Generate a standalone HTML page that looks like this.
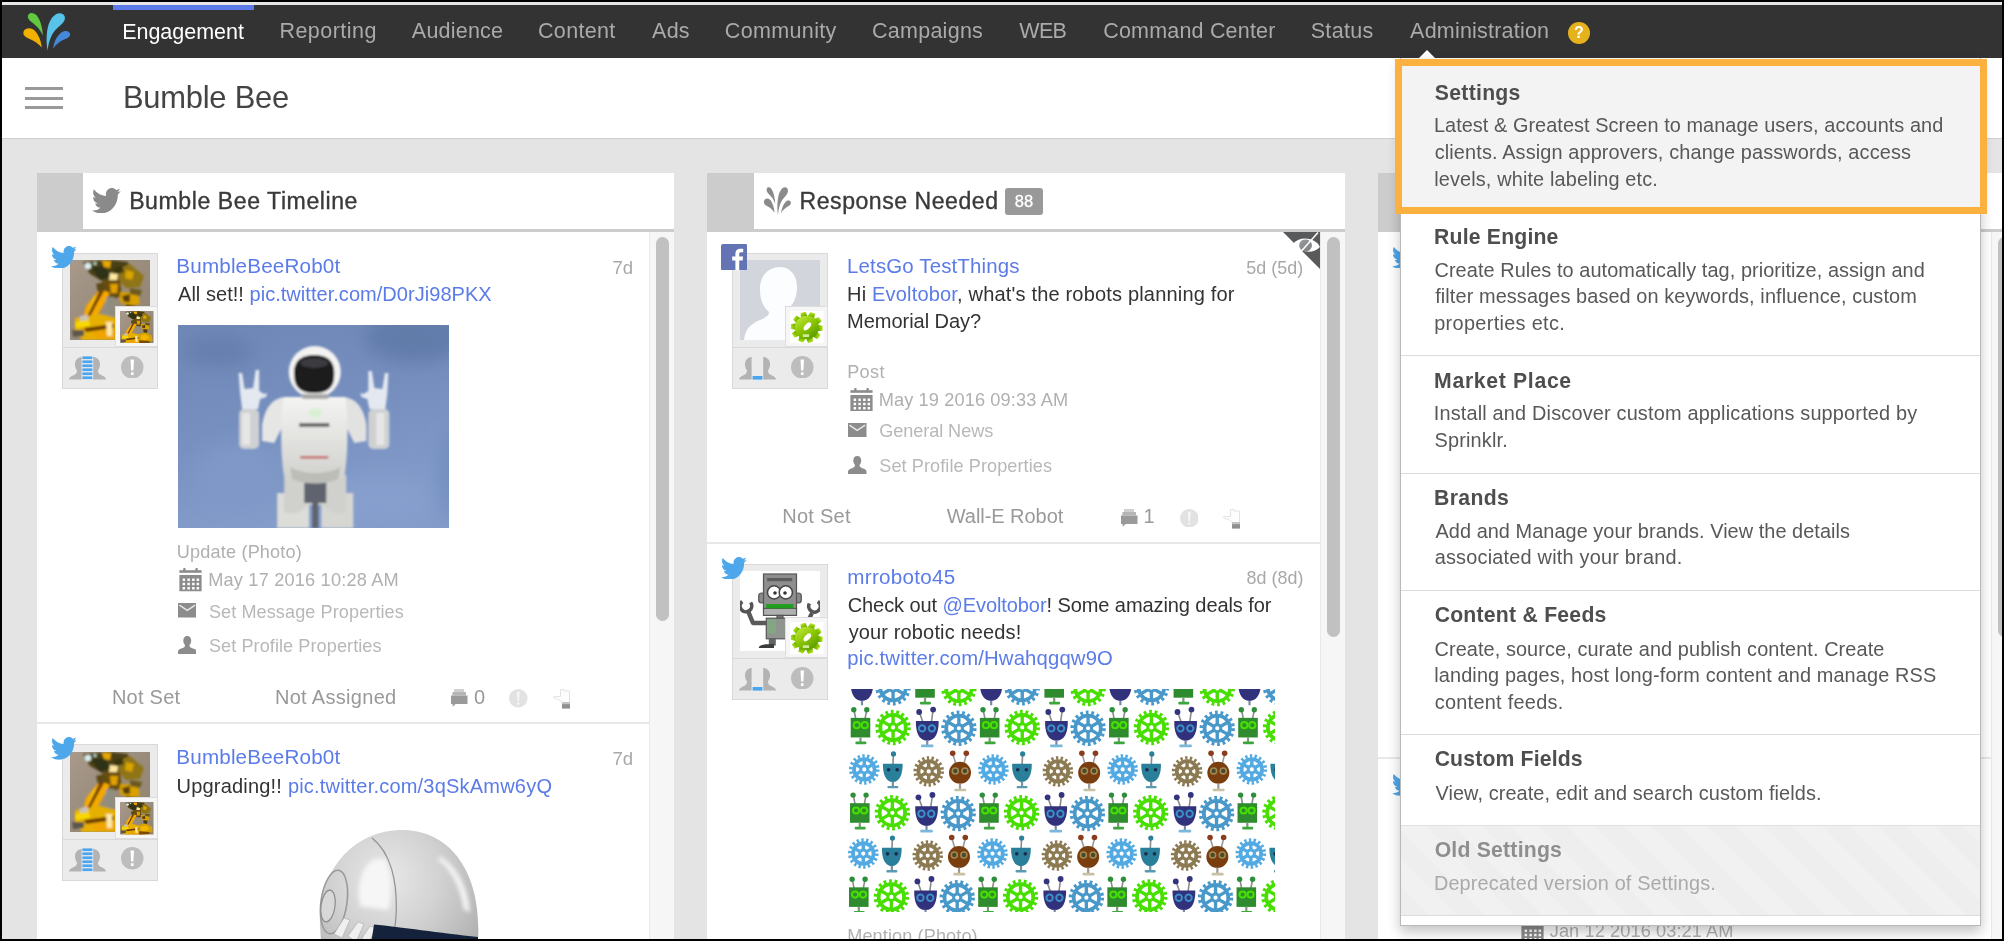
<!DOCTYPE html>
<html><head><meta charset="utf-8"><title>Bumble Bee - Engagement</title>
<style>
*{box-sizing:border-box;margin:0;padding:0}
html,body{width:2004px;height:941px;overflow:hidden;background:#000;font-family:"Liberation Sans",sans-serif;}
#frame{will-change:transform;position:absolute;left:2px;top:2px;width:2000px;height:937px;background:#e4e4e4;overflow:hidden}
#topline{position:absolute;left:0;top:0;width:2000px;height:2.5px;background:#e6e6e6;z-index:5}
#nav{position:absolute;left:0;top:2px;width:2000px;height:54px;background:#333}
#activebar{position:absolute;left:111px;top:0.5px;width:141px;height:5.5px;background:#5b7be9}
#help{position:absolute;left:1566px;top:18px;width:22px;height:22px;border-radius:50%;background:#e5b21c;color:#fff;font-weight:bold;font-size:16px;line-height:22px;text-align:center}
#caret{position:absolute;left:1417px;top:45.5px;width:0;height:0;border-left:8.5px solid transparent;border-right:8.5px solid transparent;border-bottom:8.5px solid #fff}
#hdr{position:absolute;left:0;top:56px;width:2000px;height:81px;background:#fff;border-bottom:1.5px solid #cfcfcf}
.hb{position:absolute;left:23px;width:38px;height:3px;background:#999}
#main{position:absolute;left:0;top:137px;width:2000px;height:800px}
.col{position:absolute;top:33px;width:637.3px;height:770px}
.colhdr{position:absolute;left:0;top:0;width:100%;height:60px;border-bottom:3px solid #ccc}
.hbg{position:absolute;left:0;top:0.5px;width:100%;height:56.5px;background:#fff}
.handle{position:absolute;left:0;top:0.5px;width:46.3px;height:56.5px;background:#ccc}
.badge{position:absolute;left:297.5px;top:15.5px;width:38px;height:27.5px;border-radius:3px;background:#999;color:#fff;font-size:16.5px;line-height:27.5px;text-align:center;-webkit-text-stroke:0.3px #fff}
.colbody{position:absolute;left:0;top:60px;width:100%;height:720px;background:#fff;overflow:hidden}
.track{position:absolute;right:0;top:0;width:25px;height:100%;background:#f6f6f6;border-left:1px solid #e9e9e9}
.thumb{position:absolute;left:6px;width:13px;border-radius:7px;background:#c1c1c1}
.sep{position:absolute;left:0;width:612.5px;height:2px;background:#e8e8e8}
.abox{position:absolute;width:95.5px;height:136.5px;background:#ebebeb;border:1px solid #d9d9d9}
.abox .av{position:absolute;left:7px;top:6.5px;width:80px;height:80px;overflow:hidden}
.abox .sm{position:absolute;left:52px;top:52px;width:42.5px;height:41.5px;background:#f6f6f6;border:1px solid #ddd}
.abox .sm > *{position:absolute;left:4px;top:4px;width:33.5px;height:32.5px}
.abox .line{position:absolute;left:0;top:93.5px;width:100%;height:1px;background:#d9d9d9}
#dd{position:absolute;width:581px;height:867.5px;background:#fff;box-shadow:0 6px 12px rgba(0,0,0,.24);border:1px solid #b9b9b9;border-top:none}

</style></head>
<body>
<div id="frame">
<div id="topline"></div>
<div id="nav"><div id="activebar"></div><svg style="position:absolute;left:0;top:0" width="90" height="54" viewBox="2 4 90 54">
<path fill="#62c840" d="M42.8,35.6 C42.6,28 40.5,20.5 36.8,15.6 C34.2,12.4 29.6,12 28.2,15 C27,18 29.5,20.6 32.5,22.8 C37,26.2 40.6,30 42.8,35.6Z"/>
<path fill="#57c3e8" d="M47.5,50.5 C46.2,42 46.2,32 48.6,24.6 C50.5,18.6 54.5,13.6 59.6,13.2 C64.2,13 66,17 64.4,20.6 C62.8,24.2 58.6,26.6 55.4,30 C51.4,34.4 48.8,41.5 47.5,50.5Z"/>
<path fill="#f2b100" d="M41.8,47.6 C41.2,41.5 38.8,34.5 34.6,30.4 C31,27.2 25.6,27.6 23.8,31 C22.2,34.4 25,37 28.6,38.4 C33.8,40.4 38.4,43.4 41.8,47.6Z"/>
<path fill="#4489d9" d="M53.2,48.6 C53.6,43 56.4,36.6 60.8,33 C64.4,30 69,30.6 70,33.4 C70.8,36.2 68,38 64.8,39.2 C60.2,41 56,44 53.2,48.6Z"/>
</svg><span style="position:absolute;left:120.13px;top:18px;font-size:21.5px;line-height:1;color:#fff;white-space:nowrap;letter-spacing:-0.006px;">Engagement</span><span style="position:absolute;left:277.38px;top:17px;font-size:21.5px;line-height:1;color:#aaa;white-space:nowrap;letter-spacing:0.475px;">Reporting</span><span style="position:absolute;left:409.85px;top:17px;font-size:21.5px;line-height:1;color:#aaa;white-space:nowrap;letter-spacing:0.211px;">Audience</span><span style="position:absolute;left:536.02px;top:17px;font-size:21.5px;line-height:1;color:#aaa;white-space:nowrap;letter-spacing:0.322px;">Content</span><span style="position:absolute;left:650.10px;top:17px;font-size:21.5px;line-height:1;color:#aaa;white-space:nowrap;letter-spacing:0.220px;">Ads</span><span style="position:absolute;left:722.77px;top:17px;font-size:21.5px;line-height:1;color:#aaa;white-space:nowrap;letter-spacing:0.357px;">Community</span><span style="position:absolute;left:870.02px;top:17px;font-size:21.5px;line-height:1;color:#aaa;white-space:nowrap;letter-spacing:0.260px;">Campaigns</span><span style="position:absolute;left:1017.24px;top:17px;font-size:21.5px;line-height:1;color:#aaa;white-space:nowrap;letter-spacing:-0.629px;">WEB</span><span style="position:absolute;left:1101.27px;top:17px;font-size:21.5px;line-height:1;color:#aaa;white-space:nowrap;letter-spacing:0.186px;">Command Center</span><span style="position:absolute;left:1308.63px;top:17px;font-size:21.5px;line-height:1;color:#aaa;white-space:nowrap;letter-spacing:0.353px;">Status</span><span style="position:absolute;left:1408.10px;top:17px;font-size:21.5px;line-height:1;color:#aaa;white-space:nowrap;letter-spacing:0.207px;">Administration</span><div id="help">?</div><div id="caret"></div></div>
<div id="hdr"><div class="hb" style="top:28.5px"></div><div class="hb" style="top:39.3px"></div><div class="hb" style="top:48.3px"></div><span style="position:absolute;left:120.93px;top:25px;font-size:30.9px;line-height:1;color:#444;white-space:nowrap;letter-spacing:-0.228px;">Bumble Bee</span></div>
<div id="main">
<div class="col" style="left:35px"><div class="colhdr"><div class="hbg"></div><div class="handle"></div><svg style="position:absolute;left:55px;top:15.5px" width="28.75" height="25.44" viewBox="0 2.2 24 19.6" preserveAspectRatio="none"><path fill="#8a8a8a" d="M23.953 4.57a10 10 0 01-2.825.775 4.958 4.958 0 002.163-2.723c-.951.555-2.005.959-3.127 1.184a4.92 4.92 0 00-8.384 4.482C7.69 8.095 4.067 6.13 1.64 3.162a4.822 4.822 0 00-.666 2.475c0 1.71.87 3.213 2.188 4.096a4.904 4.904 0 01-2.228-.616v.06a4.923 4.923 0 003.946 4.827 4.996 4.996 0 01-2.212.085 4.936 4.936 0 004.604 3.417 9.867 9.867 0 01-6.102 2.105c-.39 0-.779-.023-1.17-.067a13.995 13.995 0 007.557 2.209c9.053 0 13.998-7.496 13.998-13.985 0-.21 0-.42-.015-.63A9.935 9.935 0 0024 4.59z"/></svg><span style="position:absolute;left:92.15px;top:18px;font-size:23.1px;line-height:1;color:#3a3a3a;white-space:nowrap;letter-spacing:0.560px;-webkit-text-stroke:0.35px #3a3a3a;">Bumble Bee Timeline</span></div><div class="colbody"><div class="abox" style="left:25px;top:20.5px"><div class="av"><svg width="80" height="80" viewBox="0 0 80 80" preserveAspectRatio="none" style="display:block">
<defs><filter id="bb1" x="-10%" y="-10%" width="120%" height="120%"><feGaussianBlur stdDeviation="0.9"/></filter>
<linearGradient id="bb1g" x1="0" y1="0" x2="1" y2="1"><stop offset="0" stop-color="#a8998a"/><stop offset="0.5" stop-color="#9a8c7c"/><stop offset="1" stop-color="#8e8270"/></linearGradient></defs>
<rect width="80" height="80" fill="url(#bb1g)"/>
<g filter="url(#bb1)">
<path d="M13,2 L40,0 L58,2 L60,14 L52,22 L34,22 L20,14Z" fill="#4a3f12"/>
<path d="M22,8 L34,6 L40,16 L30,20Z" fill="#2e3018"/>
<circle cx="18" cy="6" r="3.2" fill="#d8efef"/><circle cx="25" cy="3.5" r="1.6" fill="#bfe0d8"/>
<path d="M32,1 L41,1 L40,8 L34,7Z" fill="#e8a800"/>
<path d="M40,13 L48,14 L47,21 L39,20Z" fill="#ffe8a0"/>
<path d="M52,16 L60,17 L58,23 L52,22Z" fill="#ffe090"/>
<path d="M50,8 L60,4 L74,16 L70,27 L56,28 L48,20Z" fill="#8f7414"/>
<path d="M56,10 L64,12 L62,20 L55,18Z" fill="#d9a400"/>
<path d="M33,20 L50,20 L52,36 L40,40 L32,34Z" fill="#6b4e0c"/>
<path d="M40,24 L48,24 L47,33 L41,33Z" fill="#e0a000"/>
<path d="M30,29 L40,33 L26,58 L13,58 L16,46Z" fill="#f5a800"/>
<path d="M24,36 L31,38 L22,55 L17,54Z" fill="#ffc800"/>
<path d="M30,30 L34,31 L20,57 L17,56Z" fill="#7a3e00"/>
<path d="M50,32 L68,33 L70,44 L58,46 L50,42Z" fill="#d9a000"/>
<path d="M52,36 L60,34 L60,42 L54,42Z" fill="#5a4008"/>
<path d="M36,37 L44,37 L44,56 L36,54Z" fill="#8e8e80"/>
<path d="M5,58 L30,54 L46,58 L46,80 L12,80 L5,70Z" fill="#e6b000"/>
<path d="M5,62 L19,60 L20,66 L6,68Z" fill="#f8d800"/>
<path d="M14,68 L44,64 L44,68 L16,72Z" fill="#6a3a00"/>
<path d="M20,72 L44,70 L44,79 L26,79Z" fill="#f0a400"/>
<path d="M36,62 L42,62 L42,76 L37,76Z" fill="#ffe9a8"/>
<path d="M2,70 L14,70 L14,76 L3,77Z" fill="#5c564c"/>
<path d="M10,56 L18,55 L18,60 L10,61Z" fill="#c9c4b8"/>
<path d="M46,56 L60,52 L76,60 L78,72 L66,80 L46,80Z" fill="#d8a000"/>
<path d="M50,60 L62,58 L70,66 L60,72 L50,70Z" fill="#f2b800"/>
<path d="M46,72 L70,74 L72,78 L46,80Z" fill="#7a4a00"/>
<path d="M56,44 L66,46 L64,54 L56,52Z" fill="#4a3a10"/>
<path d="M26,24 L34,22 L36,30 L28,32Z" fill="#5a4a14"/>
<path d="M60,28 L72,30 L70,36 L60,34Z" fill="#6a5a1c"/>
<path d="M44,8 L52,6 L54,12 L46,14Z" fill="#3a3410"/>
</g></svg></div><div class="sm"><svg width="33.5" height="32.5" viewBox="0 0 80 80" preserveAspectRatio="none" style="display:block">
<defs><filter id="bb2" x="-10%" y="-10%" width="120%" height="120%"><feGaussianBlur stdDeviation="0.9"/></filter>
<linearGradient id="bb2g" x1="0" y1="0" x2="1" y2="1"><stop offset="0" stop-color="#a8998a"/><stop offset="0.5" stop-color="#9a8c7c"/><stop offset="1" stop-color="#8e8270"/></linearGradient></defs>
<rect width="80" height="80" fill="url(#bb2g)"/>
<g filter="url(#bb2)">
<path d="M13,2 L40,0 L58,2 L60,14 L52,22 L34,22 L20,14Z" fill="#4a3f12"/>
<path d="M22,8 L34,6 L40,16 L30,20Z" fill="#2e3018"/>
<circle cx="18" cy="6" r="3.2" fill="#d8efef"/><circle cx="25" cy="3.5" r="1.6" fill="#bfe0d8"/>
<path d="M32,1 L41,1 L40,8 L34,7Z" fill="#e8a800"/>
<path d="M40,13 L48,14 L47,21 L39,20Z" fill="#ffe8a0"/>
<path d="M52,16 L60,17 L58,23 L52,22Z" fill="#ffe090"/>
<path d="M50,8 L60,4 L74,16 L70,27 L56,28 L48,20Z" fill="#8f7414"/>
<path d="M56,10 L64,12 L62,20 L55,18Z" fill="#d9a400"/>
<path d="M33,20 L50,20 L52,36 L40,40 L32,34Z" fill="#6b4e0c"/>
<path d="M40,24 L48,24 L47,33 L41,33Z" fill="#e0a000"/>
<path d="M30,29 L40,33 L26,58 L13,58 L16,46Z" fill="#f5a800"/>
<path d="M24,36 L31,38 L22,55 L17,54Z" fill="#ffc800"/>
<path d="M30,30 L34,31 L20,57 L17,56Z" fill="#7a3e00"/>
<path d="M50,32 L68,33 L70,44 L58,46 L50,42Z" fill="#d9a000"/>
<path d="M52,36 L60,34 L60,42 L54,42Z" fill="#5a4008"/>
<path d="M36,37 L44,37 L44,56 L36,54Z" fill="#8e8e80"/>
<path d="M5,58 L30,54 L46,58 L46,80 L12,80 L5,70Z" fill="#e6b000"/>
<path d="M5,62 L19,60 L20,66 L6,68Z" fill="#f8d800"/>
<path d="M14,68 L44,64 L44,68 L16,72Z" fill="#6a3a00"/>
<path d="M20,72 L44,70 L44,79 L26,79Z" fill="#f0a400"/>
<path d="M36,62 L42,62 L42,76 L37,76Z" fill="#ffe9a8"/>
<path d="M2,70 L14,70 L14,76 L3,77Z" fill="#5c564c"/>
<path d="M10,56 L18,55 L18,60 L10,61Z" fill="#c9c4b8"/>
<path d="M46,56 L60,52 L76,60 L78,72 L66,80 L46,80Z" fill="#d8a000"/>
<path d="M50,60 L62,58 L70,66 L60,72 L50,70Z" fill="#f2b800"/>
<path d="M46,72 L70,74 L72,78 L46,80Z" fill="#7a4a00"/>
<path d="M56,44 L66,46 L64,54 L56,52Z" fill="#4a3a10"/>
<path d="M26,24 L34,22 L36,30 L28,32Z" fill="#5a4a14"/>
<path d="M60,28 L72,30 L70,36 L60,34Z" fill="#6a5a1c"/>
<path d="M44,8 L52,6 L54,12 L46,14Z" fill="#3a3410"/>
</g></svg></div><div class="line"></div><svg style="position:absolute;left:5.5px;top:102.5px" width="37" height="24" viewBox="0 0 37 24"><path fill="#b3b3b3" d="M18.5,0 C25,0 31,2 31,8 C31,12 29.6,13.4 29,14.6 C29,17 30,18 32,19 C35,20.4 37,21.4 37,23.6 H0 C0,21.4 2,20.4 5,19 C7,18 8,17 8,14.6 C7.4,13.4 6,12 6,8 C6,2 12,0 18.5,0Z"/><rect x="12.6" y="0" width="11.6" height="24" fill="#ebebeb"/><rect x="13.4" y="0.4" width="10" height="2.7" fill="#4aa6f0"/><rect x="13.4" y="4.4" width="10" height="2.7" fill="#4aa6f0"/><rect x="13.4" y="8.4" width="10" height="2.7" fill="#4aa6f0"/><rect x="13.4" y="12.4" width="10" height="2.7" fill="#4aa6f0"/><rect x="13.4" y="16.4" width="10" height="2.7" fill="#4aa6f0"/><rect x="13.4" y="20.4" width="10" height="2.7" fill="#4aa6f0"/></svg><svg style="position:absolute;left:58px;top:102px" width="22.5" height="22.5" viewBox="0 0 22 22">
<circle cx="11" cy="11" r="11" fill="#bdbdbd"/><path fill="#fff" d="M9.3,3.4 H12.7 L12.1,14.2 H9.9Z M9.7,16 H12.3 V18.6 H9.7Z"/></svg></div><svg style="position:absolute;left:13.5px;top:13.5px" width="25.75" height="22.79" viewBox="0 2.2 24 19.6" preserveAspectRatio="none"><path fill="#4da7ea" d="M23.953 4.57a10 10 0 01-2.825.775 4.958 4.958 0 002.163-2.723c-.951.555-2.005.959-3.127 1.184a4.92 4.92 0 00-8.384 4.482C7.69 8.095 4.067 6.13 1.64 3.162a4.822 4.822 0 00-.666 2.475c0 1.71.87 3.213 2.188 4.096a4.904 4.904 0 01-2.228-.616v.06a4.923 4.923 0 003.946 4.827 4.996 4.996 0 01-2.212.085 4.936 4.936 0 004.604 3.417 9.867 9.867 0 01-6.102 2.105c-.39 0-.779-.023-1.17-.067a13.995 13.995 0 007.557 2.209c9.053 0 13.998-7.496 13.998-13.985 0-.21 0-.42-.015-.63A9.935 9.935 0 0024 4.59z"/></svg><span style="position:absolute;left:139.35px;top:24px;font-size:20.65px;line-height:1;color:#5b7be9;white-space:nowrap;letter-spacing:0.155px;">BumbleBeeRob0t</span><span style="position:absolute;right:41.16px;top:27px;font-size:18.6px;line-height:1;color:#a8a8a8;white-space:nowrap;">7d</span><span style="position:absolute;left:141.00px;top:52px;font-size:20.05px;line-height:1;color:#333;white-space:nowrap;letter-spacing:0.025px;">All set!! <span style="color:#5b7be9">pic.twitter.com/D0rJi98PKX</span></span><div class="abox" style="left:25px;top:512.0px"><div class="av"><svg width="80" height="80" viewBox="0 0 80 80" preserveAspectRatio="none" style="display:block">
<defs><filter id="bb3" x="-10%" y="-10%" width="120%" height="120%"><feGaussianBlur stdDeviation="0.9"/></filter>
<linearGradient id="bb3g" x1="0" y1="0" x2="1" y2="1"><stop offset="0" stop-color="#a8998a"/><stop offset="0.5" stop-color="#9a8c7c"/><stop offset="1" stop-color="#8e8270"/></linearGradient></defs>
<rect width="80" height="80" fill="url(#bb3g)"/>
<g filter="url(#bb3)">
<path d="M13,2 L40,0 L58,2 L60,14 L52,22 L34,22 L20,14Z" fill="#4a3f12"/>
<path d="M22,8 L34,6 L40,16 L30,20Z" fill="#2e3018"/>
<circle cx="18" cy="6" r="3.2" fill="#d8efef"/><circle cx="25" cy="3.5" r="1.6" fill="#bfe0d8"/>
<path d="M32,1 L41,1 L40,8 L34,7Z" fill="#e8a800"/>
<path d="M40,13 L48,14 L47,21 L39,20Z" fill="#ffe8a0"/>
<path d="M52,16 L60,17 L58,23 L52,22Z" fill="#ffe090"/>
<path d="M50,8 L60,4 L74,16 L70,27 L56,28 L48,20Z" fill="#8f7414"/>
<path d="M56,10 L64,12 L62,20 L55,18Z" fill="#d9a400"/>
<path d="M33,20 L50,20 L52,36 L40,40 L32,34Z" fill="#6b4e0c"/>
<path d="M40,24 L48,24 L47,33 L41,33Z" fill="#e0a000"/>
<path d="M30,29 L40,33 L26,58 L13,58 L16,46Z" fill="#f5a800"/>
<path d="M24,36 L31,38 L22,55 L17,54Z" fill="#ffc800"/>
<path d="M30,30 L34,31 L20,57 L17,56Z" fill="#7a3e00"/>
<path d="M50,32 L68,33 L70,44 L58,46 L50,42Z" fill="#d9a000"/>
<path d="M52,36 L60,34 L60,42 L54,42Z" fill="#5a4008"/>
<path d="M36,37 L44,37 L44,56 L36,54Z" fill="#8e8e80"/>
<path d="M5,58 L30,54 L46,58 L46,80 L12,80 L5,70Z" fill="#e6b000"/>
<path d="M5,62 L19,60 L20,66 L6,68Z" fill="#f8d800"/>
<path d="M14,68 L44,64 L44,68 L16,72Z" fill="#6a3a00"/>
<path d="M20,72 L44,70 L44,79 L26,79Z" fill="#f0a400"/>
<path d="M36,62 L42,62 L42,76 L37,76Z" fill="#ffe9a8"/>
<path d="M2,70 L14,70 L14,76 L3,77Z" fill="#5c564c"/>
<path d="M10,56 L18,55 L18,60 L10,61Z" fill="#c9c4b8"/>
<path d="M46,56 L60,52 L76,60 L78,72 L66,80 L46,80Z" fill="#d8a000"/>
<path d="M50,60 L62,58 L70,66 L60,72 L50,70Z" fill="#f2b800"/>
<path d="M46,72 L70,74 L72,78 L46,80Z" fill="#7a4a00"/>
<path d="M56,44 L66,46 L64,54 L56,52Z" fill="#4a3a10"/>
<path d="M26,24 L34,22 L36,30 L28,32Z" fill="#5a4a14"/>
<path d="M60,28 L72,30 L70,36 L60,34Z" fill="#6a5a1c"/>
<path d="M44,8 L52,6 L54,12 L46,14Z" fill="#3a3410"/>
</g></svg></div><div class="sm"><svg width="33.5" height="32.5" viewBox="0 0 80 80" preserveAspectRatio="none" style="display:block">
<defs><filter id="bb4" x="-10%" y="-10%" width="120%" height="120%"><feGaussianBlur stdDeviation="0.9"/></filter>
<linearGradient id="bb4g" x1="0" y1="0" x2="1" y2="1"><stop offset="0" stop-color="#a8998a"/><stop offset="0.5" stop-color="#9a8c7c"/><stop offset="1" stop-color="#8e8270"/></linearGradient></defs>
<rect width="80" height="80" fill="url(#bb4g)"/>
<g filter="url(#bb4)">
<path d="M13,2 L40,0 L58,2 L60,14 L52,22 L34,22 L20,14Z" fill="#4a3f12"/>
<path d="M22,8 L34,6 L40,16 L30,20Z" fill="#2e3018"/>
<circle cx="18" cy="6" r="3.2" fill="#d8efef"/><circle cx="25" cy="3.5" r="1.6" fill="#bfe0d8"/>
<path d="M32,1 L41,1 L40,8 L34,7Z" fill="#e8a800"/>
<path d="M40,13 L48,14 L47,21 L39,20Z" fill="#ffe8a0"/>
<path d="M52,16 L60,17 L58,23 L52,22Z" fill="#ffe090"/>
<path d="M50,8 L60,4 L74,16 L70,27 L56,28 L48,20Z" fill="#8f7414"/>
<path d="M56,10 L64,12 L62,20 L55,18Z" fill="#d9a400"/>
<path d="M33,20 L50,20 L52,36 L40,40 L32,34Z" fill="#6b4e0c"/>
<path d="M40,24 L48,24 L47,33 L41,33Z" fill="#e0a000"/>
<path d="M30,29 L40,33 L26,58 L13,58 L16,46Z" fill="#f5a800"/>
<path d="M24,36 L31,38 L22,55 L17,54Z" fill="#ffc800"/>
<path d="M30,30 L34,31 L20,57 L17,56Z" fill="#7a3e00"/>
<path d="M50,32 L68,33 L70,44 L58,46 L50,42Z" fill="#d9a000"/>
<path d="M52,36 L60,34 L60,42 L54,42Z" fill="#5a4008"/>
<path d="M36,37 L44,37 L44,56 L36,54Z" fill="#8e8e80"/>
<path d="M5,58 L30,54 L46,58 L46,80 L12,80 L5,70Z" fill="#e6b000"/>
<path d="M5,62 L19,60 L20,66 L6,68Z" fill="#f8d800"/>
<path d="M14,68 L44,64 L44,68 L16,72Z" fill="#6a3a00"/>
<path d="M20,72 L44,70 L44,79 L26,79Z" fill="#f0a400"/>
<path d="M36,62 L42,62 L42,76 L37,76Z" fill="#ffe9a8"/>
<path d="M2,70 L14,70 L14,76 L3,77Z" fill="#5c564c"/>
<path d="M10,56 L18,55 L18,60 L10,61Z" fill="#c9c4b8"/>
<path d="M46,56 L60,52 L76,60 L78,72 L66,80 L46,80Z" fill="#d8a000"/>
<path d="M50,60 L62,58 L70,66 L60,72 L50,70Z" fill="#f2b800"/>
<path d="M46,72 L70,74 L72,78 L46,80Z" fill="#7a4a00"/>
<path d="M56,44 L66,46 L64,54 L56,52Z" fill="#4a3a10"/>
<path d="M26,24 L34,22 L36,30 L28,32Z" fill="#5a4a14"/>
<path d="M60,28 L72,30 L70,36 L60,34Z" fill="#6a5a1c"/>
<path d="M44,8 L52,6 L54,12 L46,14Z" fill="#3a3410"/>
</g></svg></div><div class="line"></div><svg style="position:absolute;left:5.5px;top:102.5px" width="37" height="24" viewBox="0 0 37 24"><path fill="#b3b3b3" d="M18.5,0 C25,0 31,2 31,8 C31,12 29.6,13.4 29,14.6 C29,17 30,18 32,19 C35,20.4 37,21.4 37,23.6 H0 C0,21.4 2,20.4 5,19 C7,18 8,17 8,14.6 C7.4,13.4 6,12 6,8 C6,2 12,0 18.5,0Z"/><rect x="12.6" y="0" width="11.6" height="24" fill="#ebebeb"/><rect x="13.4" y="0.4" width="10" height="2.7" fill="#4aa6f0"/><rect x="13.4" y="4.4" width="10" height="2.7" fill="#4aa6f0"/><rect x="13.4" y="8.4" width="10" height="2.7" fill="#4aa6f0"/><rect x="13.4" y="12.4" width="10" height="2.7" fill="#4aa6f0"/><rect x="13.4" y="16.4" width="10" height="2.7" fill="#4aa6f0"/><rect x="13.4" y="20.4" width="10" height="2.7" fill="#4aa6f0"/></svg><svg style="position:absolute;left:58px;top:102px" width="22.5" height="22.5" viewBox="0 0 22 22">
<circle cx="11" cy="11" r="11" fill="#bdbdbd"/><path fill="#fff" d="M9.3,3.4 H12.7 L12.1,14.2 H9.9Z M9.7,16 H12.3 V18.6 H9.7Z"/></svg></div><svg style="position:absolute;left:13.5px;top:505.0px" width="25.75" height="22.79" viewBox="0 2.2 24 19.6" preserveAspectRatio="none"><path fill="#4da7ea" d="M23.953 4.57a10 10 0 01-2.825.775 4.958 4.958 0 002.163-2.723c-.951.555-2.005.959-3.127 1.184a4.92 4.92 0 00-8.384 4.482C7.69 8.095 4.067 6.13 1.64 3.162a4.822 4.822 0 00-.666 2.475c0 1.71.87 3.213 2.188 4.096a4.904 4.904 0 01-2.228-.616v.06a4.923 4.923 0 003.946 4.827 4.996 4.996 0 01-2.212.085 4.936 4.936 0 004.604 3.417 9.867 9.867 0 01-6.102 2.105c-.39 0-.779-.023-1.17-.067a13.995 13.995 0 007.557 2.209c9.053 0 13.998-7.496 13.998-13.985 0-.21 0-.42-.015-.63A9.935 9.935 0 0024 4.59z"/></svg><span style="position:absolute;left:139.35px;top:515px;font-size:20.65px;line-height:1;color:#5b7be9;white-space:nowrap;letter-spacing:0.155px;">BumbleBeeRob0t</span><span style="position:absolute;right:41.16px;top:518px;font-size:18.6px;line-height:1;color:#a8a8a8;white-space:nowrap;">7d</span><span style="position:absolute;left:139.50px;top:544px;font-size:20.05px;line-height:1;color:#333;white-space:nowrap;letter-spacing:0.188px;">Upgrading!! <span style="color:#5b7be9">pic.twitter.com/3qSkAmw6yQ</span></span><div style="position:absolute;left:140.5px;top:93px;width:271.5px;height:203px"><svg width="271.5" height="203" viewBox="0 0 271 203" preserveAspectRatio="none" style="display:block">
<defs>
<filter id="as5" x="-5%" y="-5%" width="110%" height="110%"><feGaussianBlur stdDeviation="1.2"/></filter>
<filter id="as5b" x="-5%" y="-5%" width="110%" height="110%"><feGaussianBlur stdDeviation="9"/></filter>
<linearGradient id="as5bg" x1="0" y1="0" x2="0.25" y2="1"><stop offset="0" stop-color="#6f87b6"/><stop offset="0.5" stop-color="#768fbf"/><stop offset="1" stop-color="#839cca"/></linearGradient>
<linearGradient id="as5w" x1="0" y1="0" x2="0" y2="1"><stop offset="0" stop-color="#f4f4f2"/><stop offset="1" stop-color="#cfcfcc"/></linearGradient>
</defs>
<rect width="271" height="203" fill="url(#as5bg)"/>
<g filter="url(#as5b)"><ellipse cx="236" cy="12" rx="50" ry="26" fill="#627baa"/><ellipse cx="40" cy="26" rx="36" ry="16" fill="#667fae"/><ellipse cx="200" cy="176" rx="50" ry="24" fill="#869fcd"/><ellipse cx="60" cy="150" rx="40" ry="30" fill="#7f98c7"/><ellipse cx="270" cy="150" rx="8" ry="46" fill="#708abc"/></g>
<g filter="url(#as5)">
<!-- legs -->
<path d="M99,168 H131 V203 H99Z" fill="#dcdcd8"/><path d="M143,168 H175 V203 H143Z" fill="#d6d6d2"/>
<path d="M106,150 H168 V186 C160,192 150,186 145,180 H129 C124,186 114,192 106,186Z" fill="#d0d0cc"/>
<path d="M126,156 H148 V178 H140 V203 H134 V178 H126Z" fill="#5f636e"/>
<!-- forearms -->
<rect x="61" y="84" width="20" height="40" rx="5" fill="#cfd0d2"/><rect x="190" y="84" width="21" height="40" rx="5" fill="#cfd0d2"/>
<rect x="64" y="88" width="8" height="32" fill="#e6e6e6"/><rect x="198" y="88" width="8" height="32" fill="#e6e6e6"/>
<!-- hands -->
<path d="M64,84 L62,68 L60.5,48 L64,48 L66.5,64 L75,63 L77.5,45 L81,45 L81,66 L86,69 L89,68 L88,72 L82,74 L80,84Z" fill="#e4e8f0"/>
<path d="M191,84 L189,74 L183,72 L182,68 L185,69 L190,66 L190,46 L193.5,46 L196,63 L204,64 L206.5,48 L210,48 L209,68 L207,84Z" fill="#e4e8f0"/>
<!-- shoulders / upper arms -->
<path d="M106,72 C92,74 86,86 84,100 L84,116 L96,118 L106,98Z" fill="#e6e6e4"/>
<path d="M166,72 C180,74 186,86 188,100 L188,116 L176,118 L166,98Z" fill="#e2e2e0"/>
<!-- torso -->
<path d="M106,72 H167 C170,90 170,130 166,152 C150,160 122,160 106,152 C102,130 102,90 106,72Z" fill="url(#as5w)"/>
<path d="M112,142 C126,150 148,150 162,142 L160,154 C146,160 128,160 114,154Z" fill="#bdbdb8"/>
<rect x="121" y="98" width="30" height="4" fill="#555" opacity="0.85"/>
<rect x="122" y="131" width="28" height="2.6" fill="#c05050" opacity="0.8"/>
<ellipse cx="137" cy="88" rx="7" ry="5" fill="#d6f0d0" opacity="0.8"/>
<!-- head -->
<ellipse cx="136.5" cy="47" rx="26" ry="26" fill="#f3f3f1"/>
<path d="M116,50 C115,36 123,30 136,30 C149,30 157,36 156,50 C156,62 150,68 136,68 C122,68 116,62 116,50Z" fill="#1a1a1c"/>
<ellipse cx="136" cy="38" rx="14" ry="5" fill="#4a4a4e" opacity="0.7"/>
<rect x="124" y="69" width="26" height="5" fill="#a8a8a8"/>
</g></svg></div><span style="position:absolute;left:139.84px;top:311px;font-size:18.1px;line-height:1;color:#b0b0b0;white-space:nowrap;letter-spacing:0.175px;">Update (Photo)</span><svg style="position:absolute;left:142.2px;top:336.2px" width="23" height="23.5" viewBox="0 0 23 23.5"><g fill="#8c8c8c"><rect x="4.2" y="0" width="2.4" height="3" rx="0.8"/><rect x="16.4" y="0" width="2.4" height="3" rx="0.8"/><rect x="0.4" y="2.2" width="22.2" height="2.6"/><path d="M0.4,6.9 H22.6 V23.3 H0.4Z M3.6,10.4 V12.9 H6.1 V10.4Z M8.4,10.4 V12.9 H10.9 V10.4Z M13.1,10.4 V12.9 H15.6 V10.4Z M17.6,10.4 V12.9 H20.1 V10.4Z M3.6,14.8 V17.3 H6.1 V14.8Z M8.4,14.8 V17.3 H10.9 V14.8Z M13.1,14.8 V17.3 H15.6 V14.8Z M17.6,14.8 V17.3 H20.1 V14.8Z M3.6,19.1 V21.6 H6.1 V19.1Z M8.4,19.1 V21.6 H10.9 V19.1Z M13.1,19.1 V21.6 H15.6 V19.1Z M17.6,19.1 V21.6 H20.1 V19.1Z" fill-rule="evenodd"/></g></svg><span style="position:absolute;left:171.24px;top:339px;font-size:18.2px;line-height:1;color:#b0b0b0;white-space:nowrap;letter-spacing:0.179px;">May 17 2016 10:28 AM</span><svg style="position:absolute;left:140.7px;top:371px" width="18.5" height="14.5" viewBox="0 0 18.5 14.5">
<rect width="18.5" height="14.5" fill="#8c8c8c"/><path d="M1.4,2.2 L9.25,7.4 L17.1,2.2" fill="none" stroke="#e8e8e8" stroke-width="1.4"/></svg><span style="position:absolute;left:171.89px;top:371px;font-size:18.1px;line-height:1;color:#b8b8b8;white-space:nowrap;letter-spacing:0.088px;">Set Message Properties</span><svg style="position:absolute;left:140.7px;top:404px" width="18.5" height="18" viewBox="0 0 18.5 18">
<path fill="#8c8c8c" d="M9.25,0 C11.8,0 13.2,1.9 13.2,4.4 C13.2,6.4 12.3,8 11.6,8.8 C11.3,10.6 12.2,11.4 14.4,12.2 C16.8,13 18.5,13.6 18.5,15.6 V18 H0 V15.6 C0,13.6 1.7,13 4.1,12.2 C6.3,11.4 7.2,10.6 6.9,8.8 C6.2,8 5.3,6.4 5.3,4.4 C5.3,1.9 6.7,0 9.25,0Z"/></svg><span style="position:absolute;left:171.89px;top:405px;font-size:18.1px;line-height:1;color:#b8b8b8;white-space:nowrap;letter-spacing:0.082px;">Set Profile Properties</span><span style="position:absolute;left:74.90px;top:455px;font-size:20px;line-height:1;color:#999;white-space:nowrap;letter-spacing:0.259px;">Not Set</span><span style="position:absolute;left:237.90px;top:455px;font-size:20px;line-height:1;color:#999;white-space:nowrap;letter-spacing:0.315px;">Not Assigned</span><span style="position:absolute;left:436.90px;top:455px;font-size:20px;line-height:1;color:#999;white-space:nowrap;">0</span><svg style="position:absolute;left:414px;top:457.05px" width="16.5" height="18" viewBox="0 0 16.5 18">
<rect x="3" y="0" width="10" height="3" fill="#cfcfcf"/><rect x="1.4" y="3" width="13.6" height="3.4" fill="#b5b5b5"/>
<path fill="#9a9a9a" d="M0,6.4 H16.5 V15 H4.6 L1.6,17.8 V15 H0Z"/></svg><svg style="position:absolute;left:472.3px;top:457.05px" width="18.6" height="18.6" viewBox="0 0 22 22">
<circle cx="11" cy="11" r="11" fill="#e2e2e2"/><path fill="#f6f6f6" d="M9.3,3.4 H12.7 L12.1,14.2 H9.9Z M9.7,16 H12.3 V18.6 H9.7Z"/></svg><svg style="position:absolute;left:516px;top:457.05px" width="18" height="20.5" viewBox="0 0 18 20.5">
<path fill="#fdfdfd" stroke="#e3e3e3" stroke-width="1" d="M7.5,0.5 H11 V2 H16.5 V13.5 H9 L5,10 H3 L0.6,8.6 V7.6 H7.5Z"/>
<rect x="9" y="13.6" width="8" height="6" fill="#8f8f8f"/><rect x="9" y="13.6" width="8" height="1.6" fill="#c4c4c4"/></svg><div class="sep" style="top:490.05px"></div><div style="position:absolute;left:283px;top:597.5px;width:160px;height:160px"><svg width="160" height="160" viewBox="0 0 160 160" style="display:block;overflow:visible">
<defs><radialGradient id="hm6" cx="0.42" cy="0.3" r="0.75"><stop offset="0" stop-color="#e8e8e8"/><stop offset="0.45" stop-color="#d2d2d2"/><stop offset="0.8" stop-color="#b9b9b9"/><stop offset="1" stop-color="#a6a6a6"/></radialGradient>
<filter id="hm6b"><feGaussianBlur stdDeviation="2.2"/></filter></defs>
<path d="M0,95 C-2,40 34,0 82,0 C130,0 162,42 158,110 L158,160 H4Z" fill="url(#hm6)"/>
<path d="M52,8 C70,22 78,50 76,86 C75,100 73,112 70,120" fill="none" stroke="#8f8f8f" stroke-width="1.2"/>
<g filter="url(#hm6b)"><path d="M42,44 C48,30 58,26 66,30 C72,50 72,70 68,80 L40,76 C38,64 38,54 42,44Z" fill="#f6f6f6"/>
<path d="M120,26 C136,36 148,56 150,82 L144,80 C140,58 132,40 118,30Z" fill="#f4f4f4"/></g>
<ellipse cx="14" cy="72" rx="13" ry="32" fill="none" stroke="#9a9a9a" stroke-width="1.6" transform="rotate(8 14 72)"/>
<ellipse cx="8" cy="76" rx="7" ry="16" fill="#d8d8d8" stroke="#8c8c8c" stroke-width="1.2" transform="rotate(8 8 76)"/>
<path d="M14,104 L24,88 L30,90 L22,108Z M28,106 L38,92 L44,94 L36,112Z M42,108 L50,96 L56,98 L48,114Z" fill="#efefef" stroke="#aaa" stroke-width="0.6"/>
<path d="M54,94.5 C80,97 120,103 158,107 V160 H44Z" fill="#14223c"/>
</svg></div><div class="track"><div class="thumb" style="top:5px;height:384px"></div></div></div></div><div class="col" style="left:705.4px"><div class="colhdr"><div class="hbg"></div><div class="handle"></div><svg style="position:absolute;left:54.5px;top:13px" width="30" height="31" viewBox="20 10 52 42" preserveAspectRatio="none">
<g fill="#8a8a8a"><path d="M42.8,35.6 C42.6,28 40.5,20.5 36.8,15.6 C34.2,12.4 29.6,12 28.2,15 C27,18 29.5,20.6 32.5,22.8 C37,26.2 40.6,30 42.8,35.6Z"/>
<path d="M47.5,50.5 C46.2,42 46.2,32 48.6,24.6 C50.5,18.6 54.5,13.6 59.6,13.2 C64.2,13 66,17 64.4,20.6 C62.8,24.2 58.6,26.6 55.4,30 C51.4,34.4 48.8,41.5 47.5,50.5Z"/>
<path d="M41.8,47.6 C41.2,41.5 38.8,34.5 34.6,30.4 C31,27.2 25.6,27.6 23.8,31 C22.2,34.4 25,37 28.6,38.4 C33.8,40.4 38.4,43.4 41.8,47.6Z"/>
<path d="M53.2,48.6 C53.6,43 56.4,36.6 60.8,33 C64.4,30 69,30.6 70,33.4 C70.8,36.2 68,38 64.8,39.2 C60.2,41 56,44 53.2,48.6Z"/></g></svg><span style="position:absolute;left:92.15px;top:18px;font-size:23.1px;line-height:1;color:#3a3a3a;white-space:nowrap;letter-spacing:0.514px;-webkit-text-stroke:0.35px #3a3a3a;">Response Needed</span><div class="badge">88</div></div><div class="colbody"><div class="abox" style="left:25px;top:20.5px"><div class="av"><svg width="80" height="80" viewBox="0 0 80 80" style="display:block">
<rect width="80" height="80" fill="#d2d5dc"/>
<path d="M40,7 C50,7 57,15 57,27 C57,36 54,43 50,47 C50,52 52,54 58,57 L80,66 V80 H4 C5,70 10,64 20,60 C27,57 29,55 29,52 C22,46 20,38 20,29 C20,15 29,7 40,7Z" fill="#fcfdfe"/>
<path d="M0,38 L0,80 L5,80 C6,70 10,64 20,60 C27,57 30,55 28,51 C24,47 21,41 20,34Z" fill="#cfd2da" opacity="0.0"/>
</svg></div><div class="sm"><svg width="33.5" height="32.5" viewBox="0 0 34 33" style="display:block">
<defs><linearGradient id="gr7" x1="0.2" y1="0" x2="0.6" y2="1"><stop offset="0" stop-color="#bde63a"/><stop offset="0.5" stop-color="#8cc800"/><stop offset="1" stop-color="#5f9f00"/></linearGradient></defs>
<rect width="34" height="33" fill="#fff"/>
<g transform="translate(17,16.6) rotate(-14) scale(1,0.97)" fill="url(#gr7)"><path d="M-3.4,-11 L-2.6,-16.2 L2.6,-16.2 L3.4,-11Z" transform="rotate(0)"/><path d="M-3.4,-11 L-2.6,-16.2 L2.6,-16.2 L3.4,-11Z" transform="rotate(36)"/><path d="M-3.4,-11 L-2.6,-16.2 L2.6,-16.2 L3.4,-11Z" transform="rotate(72)"/><path d="M-3.4,-11 L-2.6,-16.2 L2.6,-16.2 L3.4,-11Z" transform="rotate(108)"/><path d="M-3.4,-11 L-2.6,-16.2 L2.6,-16.2 L3.4,-11Z" transform="rotate(144)"/><path d="M-3.4,-11 L-2.6,-16.2 L2.6,-16.2 L3.4,-11Z" transform="rotate(180)"/><path d="M-3.4,-11 L-2.6,-16.2 L2.6,-16.2 L3.4,-11Z" transform="rotate(216)"/><path d="M-3.4,-11 L-2.6,-16.2 L2.6,-16.2 L3.4,-11Z" transform="rotate(252)"/><path d="M-3.4,-11 L-2.6,-16.2 L2.6,-16.2 L3.4,-11Z" transform="rotate(288)"/><path d="M-3.4,-11 L-2.6,-16.2 L2.6,-16.2 L3.4,-11Z" transform="rotate(324)"/><circle r="12.2"/></g>
<ellipse cx="17.6" cy="15.6" rx="2.6" ry="5" fill="#fff" transform="rotate(42 17.6 15.6)"/>
<rect x="13" y="23.6" width="6.4" height="2.8" fill="#e2f3b0" opacity="0.85"/>
</svg></div><div class="line"></div><svg style="position:absolute;left:5.5px;top:102.5px" width="37" height="24" viewBox="0 0 37 24"><path fill="#b3b3b3" d="M18.5,0 C25,0 31,2 31,8 C31,12 29.6,13.4 29,14.6 C29,17 30,18 32,19 C35,20.4 37,21.4 37,23.6 H0 C0,21.4 2,20.4 5,19 C7,18 8,17 8,14.6 C7.4,13.4 6,12 6,8 C6,2 12,0 18.5,0Z"/><rect x="12.6" y="0" width="11.6" height="24" fill="#ebebeb"/><rect x="13.6" y="20" width="9.8" height="3.6" fill="#4aa6f0"/></svg><svg style="position:absolute;left:58px;top:102px" width="22.5" height="22.5" viewBox="0 0 22 22">
<circle cx="11" cy="11" r="11" fill="#bdbdbd"/><path fill="#fff" d="M9.3,3.4 H12.7 L12.1,14.2 H9.9Z M9.7,16 H12.3 V18.6 H9.7Z"/></svg></div><svg style="position:absolute;left:13.5px;top:11.8px" width="26.5" height="26.5" viewBox="0 0 26.5 26.5">
<rect width="26.5" height="26.5" rx="2" fill="#6473b4"/>
<path fill="#fff" d="M18.2,26.5 V16.4 H21.6 L22.1,12.6 H18.2 V10.2 C18.2,9 18.6,8.3 20.2,8.3 H22.2 V4.9 C21.8,4.85 20.6,4.75 19.3,4.75 C16.4,4.75 14.4,6.5 14.4,9.8 V12.6 H11.2 V16.4 H14.4 V26.5Z"/></svg><svg style="position:absolute;left:575.5px;top:0px" width="37" height="37" viewBox="0 0 37 37">
<defs><linearGradient id="rbg" x1="0" y1="0" x2="1" y2="1"><stop offset="0" stop-color="#9a9c9e"/><stop offset="1" stop-color="#7c7e80"/></linearGradient></defs>
<path d="M0,0 H37 V37Z" fill="#58595b"/>
<g transform="rotate(8 23.7 13.2)"><path d="M10.5,13.2 C15.5,4.6 32,4.6 37,13.2 C32,21.8 15.5,21.8 10.5,13.2Z" fill="#fff"/><ellipse cx="22.6" cy="13.6" rx="6.4" ry="6" fill="url(#rbg)"/></g>
<path d="M35,0.5 L18.5,19" stroke="#fff" stroke-width="1.5"/></svg><span style="position:absolute;left:139.66px;top:24px;font-size:20.45px;line-height:1;color:#5b7be9;white-space:nowrap;letter-spacing:0.145px;">LetsGo TestThings</span><span style="position:absolute;right:41.33px;top:28px;font-size:17.9px;line-height:1;color:#a8a8a8;white-space:nowrap;letter-spacing:0.043px;">5d (5d)</span><span style="position:absolute;left:139.70px;top:52px;font-size:20.05px;line-height:1;color:#333;white-space:nowrap;letter-spacing:0.167px;">Hi <span style="color:#5b7be9">Evoltobor</span>, what's the robots planning for</span><span style="position:absolute;left:139.70px;top:79px;font-size:20.05px;line-height:1;color:#333;white-space:nowrap;letter-spacing:-0.052px;">Memorial Day?</span><span style="position:absolute;left:139.75px;top:131px;font-size:18.1px;line-height:1;color:#b0b0b0;white-space:nowrap;letter-spacing:0.374px;">Post</span><svg style="position:absolute;left:142.2px;top:155.7px" width="23" height="23.5" viewBox="0 0 23 23.5"><g fill="#8c8c8c"><rect x="4.2" y="0" width="2.4" height="3" rx="0.8"/><rect x="16.4" y="0" width="2.4" height="3" rx="0.8"/><rect x="0.4" y="2.2" width="22.2" height="2.6"/><path d="M0.4,6.9 H22.6 V23.3 H0.4Z M3.6,10.4 V12.9 H6.1 V10.4Z M8.4,10.4 V12.9 H10.9 V10.4Z M13.1,10.4 V12.9 H15.6 V10.4Z M17.6,10.4 V12.9 H20.1 V10.4Z M3.6,14.8 V17.3 H6.1 V14.8Z M8.4,14.8 V17.3 H10.9 V14.8Z M13.1,14.8 V17.3 H15.6 V14.8Z M17.6,14.8 V17.3 H20.1 V14.8Z M3.6,19.1 V21.6 H6.1 V19.1Z M8.4,19.1 V21.6 H10.9 V19.1Z M13.1,19.1 V21.6 H15.6 V19.1Z M17.6,19.1 V21.6 H20.1 V19.1Z" fill-rule="evenodd"/></g></svg><span style="position:absolute;left:171.24px;top:159px;font-size:18.2px;line-height:1;color:#b0b0b0;white-space:nowrap;letter-spacing:0.127px;">May 19 2016 09:33 AM</span><svg style="position:absolute;left:140.7px;top:190.5px" width="18.5" height="14.5" viewBox="0 0 18.5 14.5">
<rect width="18.5" height="14.5" fill="#8c8c8c"/><path d="M1.4,2.2 L9.25,7.4 L17.1,2.2" fill="none" stroke="#e8e8e8" stroke-width="1.4"/></svg><span style="position:absolute;left:171.79px;top:190px;font-size:18.1px;line-height:1;color:#b8b8b8;white-space:nowrap;letter-spacing:-0.056px;">General News</span><svg style="position:absolute;left:140.7px;top:223.5px" width="18.5" height="18" viewBox="0 0 18.5 18">
<path fill="#8c8c8c" d="M9.25,0 C11.8,0 13.2,1.9 13.2,4.4 C13.2,6.4 12.3,8 11.6,8.8 C11.3,10.6 12.2,11.4 14.4,12.2 C16.8,13 18.5,13.6 18.5,15.6 V18 H0 V15.6 C0,13.6 1.7,13 4.1,12.2 C6.3,11.4 7.2,10.6 6.9,8.8 C6.2,8 5.3,6.4 5.3,4.4 C5.3,1.9 6.7,0 9.25,0Z"/></svg><span style="position:absolute;left:171.89px;top:225px;font-size:18.1px;line-height:1;color:#b8b8b8;white-space:nowrap;letter-spacing:0.082px;">Set Profile Properties</span><span style="position:absolute;left:74.90px;top:274px;font-size:20px;line-height:1;color:#999;white-space:nowrap;letter-spacing:0.259px;">Not Set</span><span style="position:absolute;left:239.40px;top:274px;font-size:20px;line-height:1;color:#999;white-space:nowrap;letter-spacing:-0.052px;">Wall-E Robot</span><span style="position:absolute;left:436.20px;top:274px;font-size:20px;line-height:1;color:#999;white-space:nowrap;">1</span><svg style="position:absolute;left:414px;top:276.55px" width="16.5" height="18" viewBox="0 0 16.5 18">
<rect x="3" y="0" width="10" height="3" fill="#cfcfcf"/><rect x="1.4" y="3" width="13.6" height="3.4" fill="#b5b5b5"/>
<path fill="#9a9a9a" d="M0,6.4 H16.5 V15 H4.6 L1.6,17.8 V15 H0Z"/></svg><svg style="position:absolute;left:472.3px;top:276.55px" width="18.6" height="18.6" viewBox="0 0 22 22">
<circle cx="11" cy="11" r="11" fill="#e2e2e2"/><path fill="#f6f6f6" d="M9.3,3.4 H12.7 L12.1,14.2 H9.9Z M9.7,16 H12.3 V18.6 H9.7Z"/></svg><svg style="position:absolute;left:516px;top:276.55px" width="18" height="20.5" viewBox="0 0 18 20.5">
<path fill="#fdfdfd" stroke="#e3e3e3" stroke-width="1" d="M7.5,0.5 H11 V2 H16.5 V13.5 H9 L5,10 H3 L0.6,8.6 V7.6 H7.5Z"/>
<rect x="9" y="13.6" width="8" height="6" fill="#8f8f8f"/><rect x="9" y="13.6" width="8" height="1.6" fill="#c4c4c4"/></svg><div class="sep" style="top:309.55px"></div><div class="abox" style="left:25px;top:331.5px"><div class="av"><svg width="80" height="80" viewBox="0 0 80 80" style="display:block">
<rect width="80" height="80" fill="#fff"/>
<g stroke="#555" stroke-width="1.2">
<rect x="18.7" y="22" width="6" height="10" rx="3" fill="#8a8a8a"/><rect x="55.3" y="22" width="6" height="10" rx="3" fill="#8a8a8a"/>
<rect x="23.5" y="3" width="33" height="35" fill="#8e8e8e"/>
<rect x="23.5" y="37.4" width="33" height="7" fill="#b0b0b0"/>
<rect x="37" y="44.4" width="6" height="3" fill="#777"/>
<rect x="26.3" y="47.2" width="26" height="20.6" fill="#8f948f"/>
</g>
<rect x="27.2" y="7" width="25" height="3.2" fill="#5c5c5c"/>
<circle cx="34.1" cy="21.4" r="6.6" fill="#fff" stroke="#444" stroke-width="1.5"/><circle cx="45.8" cy="21.4" r="6.6" fill="#fff" stroke="#444" stroke-width="1.5"/>
<circle cx="35" cy="22" r="1.8" fill="#333"/><circle cx="45" cy="22" r="1.8" fill="#333"/>
<rect x="26.1" y="33.1" width="27.4" height="4.3" fill="#1f9e1f"/>
<rect x="27" y="48.5" width="9" height="14" fill="#7fae7f" opacity="0.7"/>
<path d="M26.3,52 H13 L8,40" fill="none" stroke="#5a5a5a" stroke-width="4.5" stroke-linejoin="round"/>
<path d="M2.2,30.5 A5.8,5.8 0 1,0 10.6,31.5" stroke="#555" stroke-width="3.6" fill="none"/>
<path d="M69.4,32.5 A5.8,5.8 0 1,0 77.8,30.5" stroke="#555" stroke-width="3.6" fill="none"/><path d="M72,42 L69,48" stroke="#555" stroke-width="4"/>
<rect x="28.8" y="67.6" width="7" height="7" fill="#5f6664"/>
<path d="M18.7,77 C19,74 24,73 34,73 V77Z" fill="#3c3c3c"/>
</svg></div><div class="sm"><svg width="33.5" height="32.5" viewBox="0 0 34 33" style="display:block">
<defs><linearGradient id="gr8" x1="0.2" y1="0" x2="0.6" y2="1"><stop offset="0" stop-color="#bde63a"/><stop offset="0.5" stop-color="#8cc800"/><stop offset="1" stop-color="#5f9f00"/></linearGradient></defs>
<rect width="34" height="33" fill="#fff"/>
<g transform="translate(17,16.6) rotate(-14) scale(1,0.97)" fill="url(#gr8)"><path d="M-3.4,-11 L-2.6,-16.2 L2.6,-16.2 L3.4,-11Z" transform="rotate(0)"/><path d="M-3.4,-11 L-2.6,-16.2 L2.6,-16.2 L3.4,-11Z" transform="rotate(36)"/><path d="M-3.4,-11 L-2.6,-16.2 L2.6,-16.2 L3.4,-11Z" transform="rotate(72)"/><path d="M-3.4,-11 L-2.6,-16.2 L2.6,-16.2 L3.4,-11Z" transform="rotate(108)"/><path d="M-3.4,-11 L-2.6,-16.2 L2.6,-16.2 L3.4,-11Z" transform="rotate(144)"/><path d="M-3.4,-11 L-2.6,-16.2 L2.6,-16.2 L3.4,-11Z" transform="rotate(180)"/><path d="M-3.4,-11 L-2.6,-16.2 L2.6,-16.2 L3.4,-11Z" transform="rotate(216)"/><path d="M-3.4,-11 L-2.6,-16.2 L2.6,-16.2 L3.4,-11Z" transform="rotate(252)"/><path d="M-3.4,-11 L-2.6,-16.2 L2.6,-16.2 L3.4,-11Z" transform="rotate(288)"/><path d="M-3.4,-11 L-2.6,-16.2 L2.6,-16.2 L3.4,-11Z" transform="rotate(324)"/><circle r="12.2"/></g>
<ellipse cx="17.6" cy="15.6" rx="2.6" ry="5" fill="#fff" transform="rotate(42 17.6 15.6)"/>
<rect x="13" y="23.6" width="6.4" height="2.8" fill="#e2f3b0" opacity="0.85"/>
</svg></div><div class="line"></div><svg style="position:absolute;left:5.5px;top:102.5px" width="37" height="24" viewBox="0 0 37 24"><path fill="#b3b3b3" d="M18.5,0 C25,0 31,2 31,8 C31,12 29.6,13.4 29,14.6 C29,17 30,18 32,19 C35,20.4 37,21.4 37,23.6 H0 C0,21.4 2,20.4 5,19 C7,18 8,17 8,14.6 C7.4,13.4 6,12 6,8 C6,2 12,0 18.5,0Z"/><rect x="12.6" y="0" width="11.6" height="24" fill="#ebebeb"/><rect x="13.6" y="20" width="9.8" height="3.6" fill="#4aa6f0"/></svg><svg style="position:absolute;left:58px;top:102px" width="22.5" height="22.5" viewBox="0 0 22 22">
<circle cx="11" cy="11" r="11" fill="#bdbdbd"/><path fill="#fff" d="M9.3,3.4 H12.7 L12.1,14.2 H9.9Z M9.7,16 H12.3 V18.6 H9.7Z"/></svg></div><svg style="position:absolute;left:13.5px;top:324.5px" width="25.75" height="22.79" viewBox="0 2.2 24 19.6" preserveAspectRatio="none"><path fill="#4da7ea" d="M23.953 4.57a10 10 0 01-2.825.775 4.958 4.958 0 002.163-2.723c-.951.555-2.005.959-3.127 1.184a4.92 4.92 0 00-8.384 4.482C7.69 8.095 4.067 6.13 1.64 3.162a4.822 4.822 0 00-.666 2.475c0 1.71.87 3.213 2.188 4.096a4.904 4.904 0 01-2.228-.616v.06a4.923 4.923 0 003.946 4.827 4.996 4.996 0 01-2.212.085 4.936 4.936 0 004.604 3.417 9.867 9.867 0 01-6.102 2.105c-.39 0-.779-.023-1.17-.067a13.995 13.995 0 007.557 2.209c9.053 0 13.998-7.496 13.998-13.985 0-.21 0-.42-.015-.63A9.935 9.935 0 0024 4.59z"/></svg><span style="position:absolute;left:139.96px;top:335px;font-size:20.65px;line-height:1;color:#5b7be9;white-space:nowrap;letter-spacing:0.264px;">mrroboto45</span><span style="position:absolute;right:41.24px;top:338px;font-size:17.9px;line-height:1;color:#a8a8a8;white-space:nowrap;letter-spacing:0.026px;">8d (8d)</span><span style="position:absolute;left:140.30px;top:363px;font-size:20.05px;line-height:1;color:#333;white-space:nowrap;letter-spacing:-0.096px;">Check out <span style="color:#5b7be9">@Evoltobor</span>! Some amazing deals for</span><span style="position:absolute;left:141.30px;top:390px;font-size:20.05px;line-height:1;color:#333;white-space:nowrap;letter-spacing:0.119px;">your robotic needs!</span><span style="position:absolute;left:139.98px;top:416px;font-size:20.3px;line-height:1;color:#333;white-space:nowrap;letter-spacing:0.161px;"><span style="color:#5b7be9">pic.twitter.com/Hwahqgqw9O</span></span><div style="position:absolute;left:141px;top:456.79999999999995px;width:426.6px;height:223.2px;overflow:hidden"><svg width="426.6" height="223.2" viewBox="0 0 427 223" style="display:block"><defs><filter id="pt9"><feGaussianBlur stdDeviation="0.45"/></filter></defs><rect width="427" height="223" fill="#fff"/><g filter="url(#pt9)"><g transform="translate(-194.60000000000002,-39.8)"><path d="M68,31.8 H90.7 C91,42 88,51.5 79.3,51.5 C70.5,51.5 67.6,42 68,31.8Z" fill="#30307c"/><rect x="78.2" y="51.3" width="2.2" height="4.6" fill="#7a8aa0"/></g><g transform="translate(-84.20000000000002,-1.5)" stroke="#4a98ca" fill="none"><circle r="15.90" stroke-width="3.6" stroke-dasharray="2.775 2.775"/><circle r="12.70" stroke-width="3.8"/><line x1="-12.70" y1="0" x2="12.70" y2="0" stroke-width="3.4" transform="rotate(30)"/><line x1="-12.70" y1="0" x2="12.70" y2="0" stroke-width="3.4" transform="rotate(90)"/><line x1="-12.70" y1="0" x2="12.70" y2="0" stroke-width="3.4" transform="rotate(150)"/><circle r="3.6" stroke-width="3" fill="#fff"/></g><g transform="translate(-64.70000000000002,-39.8)"><rect x="2.7" y="28.7" width="19.6" height="19.6" fill="#2e8b2e"/><rect x="11.4" y="48.3" width="2.2" height="4.6" fill="#7a9a7a"/><rect x="7.4" y="52.4" width="11" height="2.6" rx="1" fill="#3aa63a"/></g><g transform="translate(-18.30000000000001,-0.7)" stroke="#46de00" fill="none"><circle r="15.90" stroke-width="3.6" stroke-dasharray="2.775 2.775"/><circle r="12.70" stroke-width="3.8"/><line x1="-12.70" y1="0" x2="12.70" y2="0" stroke-width="3.4" transform="rotate(30)"/><line x1="-12.70" y1="0" x2="12.70" y2="0" stroke-width="3.4" transform="rotate(90)"/><line x1="-12.70" y1="0" x2="12.70" y2="0" stroke-width="3.4" transform="rotate(150)"/><circle r="3.6" stroke-width="3" fill="#fff"/></g><g transform="translate(-129.3,0.0)"><line x1="6.2" y1="21.5" x2="7.8" y2="30" stroke="#8a8a8a" stroke-width="1.6"/><line x1="18.6" y1="21.5" x2="17" y2="30" stroke="#8a8a8a" stroke-width="1.6"/><circle cx="5.8" cy="20.6" r="2.7" fill="#2f8f3a"/><circle cx="18.8" cy="20.6" r="2.7" fill="#2f8f3a"/><rect x="2.7" y="28.7" width="19.6" height="19.6" fill="#2e8b2e"/><circle cx="8.8" cy="36" r="3.1" fill="none" stroke="#46e000" stroke-width="2"/><circle cx="16.8" cy="36" r="3.1" fill="none" stroke="#46e000" stroke-width="2"/><rect x="11.4" y="48.3" width="2.2" height="4.6" fill="#7a9a7a"/><rect x="7.4" y="52.4" width="11" height="2.6" rx="1" fill="#3aa63a"/></g><g transform="translate(-84.20000000000002,38.3)" stroke="#46de00" fill="none"><circle r="15.90" stroke-width="3.6" stroke-dasharray="2.775 2.775"/><circle r="12.70" stroke-width="3.8"/><line x1="-12.70" y1="0" x2="12.70" y2="0" stroke-width="3.4" transform="rotate(30)"/><line x1="-12.70" y1="0" x2="12.70" y2="0" stroke-width="3.4" transform="rotate(90)"/><line x1="-12.70" y1="0" x2="12.70" y2="0" stroke-width="3.4" transform="rotate(150)"/><circle r="3.6" stroke-width="3" fill="#fff"/></g><g transform="translate(-129.3,0.0)"><line x1="71.8" y1="24" x2="75" y2="33" stroke="#8a8a8a" stroke-width="1.6"/><line x1="85" y1="22" x2="83.5" y2="33" stroke="#8a8a8a" stroke-width="1.6"/><circle cx="71.2" cy="22.8" r="2.9" fill="#33347e"/><circle cx="85.2" cy="20.4" r="2.9" fill="#33347e"/><path d="M68,31.8 H90.7 C91,42 88,51.5 79.3,51.5 C70.5,51.5 67.6,42 68,31.8Z" fill="#30307c"/><circle cx="74.2" cy="39.2" r="3.2" fill="none" stroke="#3a90c6" stroke-width="2"/><circle cx="84" cy="39.2" r="3.2" fill="none" stroke="#3a90c6" stroke-width="2"/><rect x="78.2" y="51.3" width="2.2" height="4.6" fill="#7a8aa0"/><rect x="73" y="55.4" width="12.6" height="2.6" rx="1" fill="#7ab8da"/></g><g transform="translate(-18.30000000000001,39.099999999999994)" stroke="#4a98ca" fill="none"><circle r="15.90" stroke-width="3.6" stroke-dasharray="2.775 2.775"/><circle r="12.70" stroke-width="3.8"/><line x1="-12.70" y1="0" x2="12.70" y2="0" stroke-width="3.4" transform="rotate(30)"/><line x1="-12.70" y1="0" x2="12.70" y2="0" stroke-width="3.4" transform="rotate(90)"/><line x1="-12.70" y1="0" x2="12.70" y2="0" stroke-width="3.4" transform="rotate(150)"/><circle r="3.6" stroke-width="3" fill="#fff"/></g><g transform="translate(-113.00000000000001,80.3)" stroke="#52aae2" fill="none"><circle r="13.50" stroke-width="3.6" stroke-dasharray="2.356 2.356"/><circle r="10.30" stroke-width="3.8"/><line x1="-10.30" y1="0" x2="10.30" y2="0" stroke-width="3.4" transform="rotate(30)"/><line x1="-10.30" y1="0" x2="10.30" y2="0" stroke-width="3.4" transform="rotate(90)"/><line x1="-10.30" y1="0" x2="10.30" y2="0" stroke-width="3.4" transform="rotate(150)"/><circle r="3.6" stroke-width="3" fill="#fff"/></g><g transform="translate(-129.3,0.0)"><line x1="45.4" y1="66" x2="45" y2="75" stroke="#8a8a8a" stroke-width="1.6"/><circle cx="45.5" cy="64.8" r="2.6" fill="#2b7f9a"/><path d="M35,74.6 H54.6 C55,84 52,92.9 44.8,92.9 C37.6,92.9 34.6,84 35,74.6Z" fill="#2b7f9a"/><circle cx="40.6" cy="80.6" r="1.8" fill="#1a2a4a"/><circle cx="49.2" cy="80.6" r="1.8" fill="#1a2a4a"/><rect x="43.8" y="92.7" width="2.2" height="4.4" fill="#7a909a"/><rect x="39.4" y="96.8" width="11" height="2.4" rx="1" fill="#5a9ab0"/></g><g transform="translate(-48.500000000000014,82.3)" stroke="#8c7a52" fill="none"><circle r="13.50" stroke-width="3.6" stroke-dasharray="2.356 2.356"/><circle r="10.30" stroke-width="3.8"/><line x1="-10.30" y1="0" x2="10.30" y2="0" stroke-width="3.4" transform="rotate(30)"/><line x1="-10.30" y1="0" x2="10.30" y2="0" stroke-width="3.4" transform="rotate(90)"/><line x1="-10.30" y1="0" x2="10.30" y2="0" stroke-width="3.4" transform="rotate(150)"/><circle r="3.6" stroke-width="3" fill="#fff"/></g><g transform="translate(-129.3,0.0)"><line x1="105" y1="65" x2="108" y2="75" stroke="#9a9a9a" stroke-width="1.6"/><line x1="118.4" y1="65" x2="116" y2="75" stroke="#9a9a9a" stroke-width="1.6"/><circle cx="104.8" cy="64.2" r="2.8" fill="#8a3c1a"/><circle cx="118.4" cy="64.2" r="2.8" fill="#8a3c1a"/><circle cx="112.1" cy="83.7" r="11" fill="#7a3c10"/><circle cx="107.4" cy="81.8" r="3" fill="#4a4a2a" stroke="#a08a52" stroke-width="1.6"/><circle cx="117" cy="81.8" r="3" fill="#4a4a2a" stroke="#a08a52" stroke-width="1.6"/><rect x="111" y="94.4" width="2.2" height="5.4" fill="#9a9a9a"/><rect x="106.4" y="99.6" width="12" height="2.6" rx="1" fill="#c8c2a4"/></g><g transform="translate(-130.0,85.4)"><line x1="6.2" y1="21.5" x2="7.8" y2="30" stroke="#8a8a8a" stroke-width="1.6"/><line x1="18.6" y1="21.5" x2="17" y2="30" stroke="#8a8a8a" stroke-width="1.6"/><circle cx="5.8" cy="20.6" r="2.7" fill="#2f8f3a"/><circle cx="18.8" cy="20.6" r="2.7" fill="#2f8f3a"/><rect x="2.7" y="28.7" width="19.6" height="19.6" fill="#2e8b2e"/><circle cx="8.8" cy="36" r="3.1" fill="none" stroke="#46e000" stroke-width="2"/><circle cx="16.8" cy="36" r="3.1" fill="none" stroke="#46e000" stroke-width="2"/><rect x="11.4" y="48.3" width="2.2" height="4.6" fill="#7a9a7a"/><rect x="7.4" y="52.4" width="11" height="2.6" rx="1" fill="#3aa63a"/></g><g transform="translate(-84.9,123.7)" stroke="#46de00" fill="none"><circle r="15.90" stroke-width="3.6" stroke-dasharray="2.775 2.775"/><circle r="12.70" stroke-width="3.8"/><line x1="-12.70" y1="0" x2="12.70" y2="0" stroke-width="3.4" transform="rotate(30)"/><line x1="-12.70" y1="0" x2="12.70" y2="0" stroke-width="3.4" transform="rotate(90)"/><line x1="-12.70" y1="0" x2="12.70" y2="0" stroke-width="3.4" transform="rotate(150)"/><circle r="3.6" stroke-width="3" fill="#fff"/></g><g transform="translate(-130.0,85.4)"><line x1="71.8" y1="24" x2="75" y2="33" stroke="#8a8a8a" stroke-width="1.6"/><line x1="85" y1="22" x2="83.5" y2="33" stroke="#8a8a8a" stroke-width="1.6"/><circle cx="71.2" cy="22.8" r="2.9" fill="#33347e"/><circle cx="85.2" cy="20.4" r="2.9" fill="#33347e"/><path d="M68,31.8 H90.7 C91,42 88,51.5 79.3,51.5 C70.5,51.5 67.6,42 68,31.8Z" fill="#30307c"/><circle cx="74.2" cy="39.2" r="3.2" fill="none" stroke="#3a90c6" stroke-width="2"/><circle cx="84" cy="39.2" r="3.2" fill="none" stroke="#3a90c6" stroke-width="2"/><rect x="78.2" y="51.3" width="2.2" height="4.6" fill="#7a8aa0"/><rect x="73" y="55.4" width="12.6" height="2.6" rx="1" fill="#7ab8da"/></g><g transform="translate(-19.0,124.5)" stroke="#4a98ca" fill="none"><circle r="15.90" stroke-width="3.6" stroke-dasharray="2.775 2.775"/><circle r="12.70" stroke-width="3.8"/><line x1="-12.70" y1="0" x2="12.70" y2="0" stroke-width="3.4" transform="rotate(30)"/><line x1="-12.70" y1="0" x2="12.70" y2="0" stroke-width="3.4" transform="rotate(90)"/><line x1="-12.70" y1="0" x2="12.70" y2="0" stroke-width="3.4" transform="rotate(150)"/><circle r="3.6" stroke-width="3" fill="#fff"/></g><g transform="translate(-114.00000000000001,164.5)" stroke="#52aae2" fill="none"><circle r="13.50" stroke-width="3.6" stroke-dasharray="2.356 2.356"/><circle r="10.30" stroke-width="3.8"/><line x1="-10.30" y1="0" x2="10.30" y2="0" stroke-width="3.4" transform="rotate(30)"/><line x1="-10.30" y1="0" x2="10.30" y2="0" stroke-width="3.4" transform="rotate(90)"/><line x1="-10.30" y1="0" x2="10.30" y2="0" stroke-width="3.4" transform="rotate(150)"/><circle r="3.6" stroke-width="3" fill="#fff"/></g><g transform="translate(-130.3,84.2)"><line x1="45.4" y1="66" x2="45" y2="75" stroke="#8a8a8a" stroke-width="1.6"/><circle cx="45.5" cy="64.8" r="2.6" fill="#2b7f9a"/><path d="M35,74.6 H54.6 C55,84 52,92.9 44.8,92.9 C37.6,92.9 34.6,84 35,74.6Z" fill="#2b7f9a"/><circle cx="40.6" cy="80.6" r="1.8" fill="#1a2a4a"/><circle cx="49.2" cy="80.6" r="1.8" fill="#1a2a4a"/><rect x="43.8" y="92.7" width="2.2" height="4.4" fill="#7a909a"/><rect x="39.4" y="96.8" width="11" height="2.4" rx="1" fill="#5a9ab0"/></g><g transform="translate(-49.500000000000014,166.5)" stroke="#8c7a52" fill="none"><circle r="13.50" stroke-width="3.6" stroke-dasharray="2.356 2.356"/><circle r="10.30" stroke-width="3.8"/><line x1="-10.30" y1="0" x2="10.30" y2="0" stroke-width="3.4" transform="rotate(30)"/><line x1="-10.30" y1="0" x2="10.30" y2="0" stroke-width="3.4" transform="rotate(90)"/><line x1="-10.30" y1="0" x2="10.30" y2="0" stroke-width="3.4" transform="rotate(150)"/><circle r="3.6" stroke-width="3" fill="#fff"/></g><g transform="translate(-130.3,84.2)"><line x1="105" y1="65" x2="108" y2="75" stroke="#9a9a9a" stroke-width="1.6"/><line x1="118.4" y1="65" x2="116" y2="75" stroke="#9a9a9a" stroke-width="1.6"/><circle cx="104.8" cy="64.2" r="2.8" fill="#8a3c1a"/><circle cx="118.4" cy="64.2" r="2.8" fill="#8a3c1a"/><circle cx="112.1" cy="83.7" r="11" fill="#7a3c10"/><circle cx="107.4" cy="81.8" r="3" fill="#4a4a2a" stroke="#a08a52" stroke-width="1.6"/><circle cx="117" cy="81.8" r="3" fill="#4a4a2a" stroke="#a08a52" stroke-width="1.6"/><rect x="111" y="94.4" width="2.2" height="5.4" fill="#9a9a9a"/><rect x="106.4" y="99.6" width="12" height="2.6" rx="1" fill="#c8c2a4"/></g><g transform="translate(-131.0,169.60000000000002)"><line x1="6.2" y1="21.5" x2="7.8" y2="30" stroke="#8a8a8a" stroke-width="1.6"/><line x1="18.6" y1="21.5" x2="17" y2="30" stroke="#8a8a8a" stroke-width="1.6"/><circle cx="5.8" cy="20.6" r="2.7" fill="#2f8f3a"/><circle cx="18.8" cy="20.6" r="2.7" fill="#2f8f3a"/><rect x="2.7" y="28.7" width="19.6" height="19.6" fill="#2e8b2e"/><circle cx="8.8" cy="36" r="3.1" fill="none" stroke="#46e000" stroke-width="2"/><circle cx="16.8" cy="36" r="3.1" fill="none" stroke="#46e000" stroke-width="2"/><rect x="11.4" y="48.3" width="2.2" height="4.6" fill="#7a9a7a"/><rect x="7.4" y="52.4" width="11" height="2.6" rx="1" fill="#3aa63a"/></g><g transform="translate(-85.9,207.9)" stroke="#46de00" fill="none"><circle r="15.90" stroke-width="3.6" stroke-dasharray="2.775 2.775"/><circle r="12.70" stroke-width="3.8"/><line x1="-12.70" y1="0" x2="12.70" y2="0" stroke-width="3.4" transform="rotate(30)"/><line x1="-12.70" y1="0" x2="12.70" y2="0" stroke-width="3.4" transform="rotate(90)"/><line x1="-12.70" y1="0" x2="12.70" y2="0" stroke-width="3.4" transform="rotate(150)"/><circle r="3.6" stroke-width="3" fill="#fff"/></g><g transform="translate(-131.0,169.60000000000002)"><line x1="71.8" y1="24" x2="75" y2="33" stroke="#8a8a8a" stroke-width="1.6"/><line x1="85" y1="22" x2="83.5" y2="33" stroke="#8a8a8a" stroke-width="1.6"/><circle cx="71.2" cy="22.8" r="2.9" fill="#33347e"/><circle cx="85.2" cy="20.4" r="2.9" fill="#33347e"/><path d="M68,31.8 H90.7 C91,42 88,51.5 79.3,51.5 C70.5,51.5 67.6,42 68,31.8Z" fill="#30307c"/><circle cx="74.2" cy="39.2" r="3.2" fill="none" stroke="#3a90c6" stroke-width="2"/><circle cx="84" cy="39.2" r="3.2" fill="none" stroke="#3a90c6" stroke-width="2"/><rect x="78.2" y="51.3" width="2.2" height="4.6" fill="#7a8aa0"/><rect x="73" y="55.4" width="12.6" height="2.6" rx="1" fill="#7ab8da"/></g><g transform="translate(-20.0,208.70000000000002)" stroke="#4a98ca" fill="none"><circle r="15.90" stroke-width="3.6" stroke-dasharray="2.775 2.775"/><circle r="12.70" stroke-width="3.8"/><line x1="-12.70" y1="0" x2="12.70" y2="0" stroke-width="3.4" transform="rotate(30)"/><line x1="-12.70" y1="0" x2="12.70" y2="0" stroke-width="3.4" transform="rotate(90)"/><line x1="-12.70" y1="0" x2="12.70" y2="0" stroke-width="3.4" transform="rotate(150)"/><circle r="3.6" stroke-width="3" fill="#fff"/></g><g transform="translate(-65.3,-39.8)"><path d="M68,31.8 H90.7 C91,42 88,51.5 79.3,51.5 C70.5,51.5 67.6,42 68,31.8Z" fill="#30307c"/><rect x="78.2" y="51.3" width="2.2" height="4.6" fill="#7a8aa0"/></g><g transform="translate(45.1,-1.5)" stroke="#4a98ca" fill="none"><circle r="15.90" stroke-width="3.6" stroke-dasharray="2.775 2.775"/><circle r="12.70" stroke-width="3.8"/><line x1="-12.70" y1="0" x2="12.70" y2="0" stroke-width="3.4" transform="rotate(30)"/><line x1="-12.70" y1="0" x2="12.70" y2="0" stroke-width="3.4" transform="rotate(90)"/><line x1="-12.70" y1="0" x2="12.70" y2="0" stroke-width="3.4" transform="rotate(150)"/><circle r="3.6" stroke-width="3" fill="#fff"/></g><g transform="translate(64.6,-39.8)"><rect x="2.7" y="28.7" width="19.6" height="19.6" fill="#2e8b2e"/><rect x="11.4" y="48.3" width="2.2" height="4.6" fill="#7a9a7a"/><rect x="7.4" y="52.4" width="11" height="2.6" rx="1" fill="#3aa63a"/></g><g transform="translate(111.0,-0.7)" stroke="#46de00" fill="none"><circle r="15.90" stroke-width="3.6" stroke-dasharray="2.775 2.775"/><circle r="12.70" stroke-width="3.8"/><line x1="-12.70" y1="0" x2="12.70" y2="0" stroke-width="3.4" transform="rotate(30)"/><line x1="-12.70" y1="0" x2="12.70" y2="0" stroke-width="3.4" transform="rotate(90)"/><line x1="-12.70" y1="0" x2="12.70" y2="0" stroke-width="3.4" transform="rotate(150)"/><circle r="3.6" stroke-width="3" fill="#fff"/></g><g transform="translate(0.0,0.0)"><line x1="6.2" y1="21.5" x2="7.8" y2="30" stroke="#8a8a8a" stroke-width="1.6"/><line x1="18.6" y1="21.5" x2="17" y2="30" stroke="#8a8a8a" stroke-width="1.6"/><circle cx="5.8" cy="20.6" r="2.7" fill="#2f8f3a"/><circle cx="18.8" cy="20.6" r="2.7" fill="#2f8f3a"/><rect x="2.7" y="28.7" width="19.6" height="19.6" fill="#2e8b2e"/><circle cx="8.8" cy="36" r="3.1" fill="none" stroke="#46e000" stroke-width="2"/><circle cx="16.8" cy="36" r="3.1" fill="none" stroke="#46e000" stroke-width="2"/><rect x="11.4" y="48.3" width="2.2" height="4.6" fill="#7a9a7a"/><rect x="7.4" y="52.4" width="11" height="2.6" rx="1" fill="#3aa63a"/></g><g transform="translate(45.1,38.3)" stroke="#46de00" fill="none"><circle r="15.90" stroke-width="3.6" stroke-dasharray="2.775 2.775"/><circle r="12.70" stroke-width="3.8"/><line x1="-12.70" y1="0" x2="12.70" y2="0" stroke-width="3.4" transform="rotate(30)"/><line x1="-12.70" y1="0" x2="12.70" y2="0" stroke-width="3.4" transform="rotate(90)"/><line x1="-12.70" y1="0" x2="12.70" y2="0" stroke-width="3.4" transform="rotate(150)"/><circle r="3.6" stroke-width="3" fill="#fff"/></g><g transform="translate(0.0,0.0)"><line x1="71.8" y1="24" x2="75" y2="33" stroke="#8a8a8a" stroke-width="1.6"/><line x1="85" y1="22" x2="83.5" y2="33" stroke="#8a8a8a" stroke-width="1.6"/><circle cx="71.2" cy="22.8" r="2.9" fill="#33347e"/><circle cx="85.2" cy="20.4" r="2.9" fill="#33347e"/><path d="M68,31.8 H90.7 C91,42 88,51.5 79.3,51.5 C70.5,51.5 67.6,42 68,31.8Z" fill="#30307c"/><circle cx="74.2" cy="39.2" r="3.2" fill="none" stroke="#3a90c6" stroke-width="2"/><circle cx="84" cy="39.2" r="3.2" fill="none" stroke="#3a90c6" stroke-width="2"/><rect x="78.2" y="51.3" width="2.2" height="4.6" fill="#7a8aa0"/><rect x="73" y="55.4" width="12.6" height="2.6" rx="1" fill="#7ab8da"/></g><g transform="translate(111.0,39.099999999999994)" stroke="#4a98ca" fill="none"><circle r="15.90" stroke-width="3.6" stroke-dasharray="2.775 2.775"/><circle r="12.70" stroke-width="3.8"/><line x1="-12.70" y1="0" x2="12.70" y2="0" stroke-width="3.4" transform="rotate(30)"/><line x1="-12.70" y1="0" x2="12.70" y2="0" stroke-width="3.4" transform="rotate(90)"/><line x1="-12.70" y1="0" x2="12.70" y2="0" stroke-width="3.4" transform="rotate(150)"/><circle r="3.6" stroke-width="3" fill="#fff"/></g><g transform="translate(16.3,80.3)" stroke="#52aae2" fill="none"><circle r="13.50" stroke-width="3.6" stroke-dasharray="2.356 2.356"/><circle r="10.30" stroke-width="3.8"/><line x1="-10.30" y1="0" x2="10.30" y2="0" stroke-width="3.4" transform="rotate(30)"/><line x1="-10.30" y1="0" x2="10.30" y2="0" stroke-width="3.4" transform="rotate(90)"/><line x1="-10.30" y1="0" x2="10.30" y2="0" stroke-width="3.4" transform="rotate(150)"/><circle r="3.6" stroke-width="3" fill="#fff"/></g><g transform="translate(0.0,0.0)"><line x1="45.4" y1="66" x2="45" y2="75" stroke="#8a8a8a" stroke-width="1.6"/><circle cx="45.5" cy="64.8" r="2.6" fill="#2b7f9a"/><path d="M35,74.6 H54.6 C55,84 52,92.9 44.8,92.9 C37.6,92.9 34.6,84 35,74.6Z" fill="#2b7f9a"/><circle cx="40.6" cy="80.6" r="1.8" fill="#1a2a4a"/><circle cx="49.2" cy="80.6" r="1.8" fill="#1a2a4a"/><rect x="43.8" y="92.7" width="2.2" height="4.4" fill="#7a909a"/><rect x="39.4" y="96.8" width="11" height="2.4" rx="1" fill="#5a9ab0"/></g><g transform="translate(80.8,82.3)" stroke="#8c7a52" fill="none"><circle r="13.50" stroke-width="3.6" stroke-dasharray="2.356 2.356"/><circle r="10.30" stroke-width="3.8"/><line x1="-10.30" y1="0" x2="10.30" y2="0" stroke-width="3.4" transform="rotate(30)"/><line x1="-10.30" y1="0" x2="10.30" y2="0" stroke-width="3.4" transform="rotate(90)"/><line x1="-10.30" y1="0" x2="10.30" y2="0" stroke-width="3.4" transform="rotate(150)"/><circle r="3.6" stroke-width="3" fill="#fff"/></g><g transform="translate(0.0,0.0)"><line x1="105" y1="65" x2="108" y2="75" stroke="#9a9a9a" stroke-width="1.6"/><line x1="118.4" y1="65" x2="116" y2="75" stroke="#9a9a9a" stroke-width="1.6"/><circle cx="104.8" cy="64.2" r="2.8" fill="#8a3c1a"/><circle cx="118.4" cy="64.2" r="2.8" fill="#8a3c1a"/><circle cx="112.1" cy="83.7" r="11" fill="#7a3c10"/><circle cx="107.4" cy="81.8" r="3" fill="#4a4a2a" stroke="#a08a52" stroke-width="1.6"/><circle cx="117" cy="81.8" r="3" fill="#4a4a2a" stroke="#a08a52" stroke-width="1.6"/><rect x="111" y="94.4" width="2.2" height="5.4" fill="#9a9a9a"/><rect x="106.4" y="99.6" width="12" height="2.6" rx="1" fill="#c8c2a4"/></g><g transform="translate(-0.7,85.4)"><line x1="6.2" y1="21.5" x2="7.8" y2="30" stroke="#8a8a8a" stroke-width="1.6"/><line x1="18.6" y1="21.5" x2="17" y2="30" stroke="#8a8a8a" stroke-width="1.6"/><circle cx="5.8" cy="20.6" r="2.7" fill="#2f8f3a"/><circle cx="18.8" cy="20.6" r="2.7" fill="#2f8f3a"/><rect x="2.7" y="28.7" width="19.6" height="19.6" fill="#2e8b2e"/><circle cx="8.8" cy="36" r="3.1" fill="none" stroke="#46e000" stroke-width="2"/><circle cx="16.8" cy="36" r="3.1" fill="none" stroke="#46e000" stroke-width="2"/><rect x="11.4" y="48.3" width="2.2" height="4.6" fill="#7a9a7a"/><rect x="7.4" y="52.4" width="11" height="2.6" rx="1" fill="#3aa63a"/></g><g transform="translate(44.4,123.7)" stroke="#46de00" fill="none"><circle r="15.90" stroke-width="3.6" stroke-dasharray="2.775 2.775"/><circle r="12.70" stroke-width="3.8"/><line x1="-12.70" y1="0" x2="12.70" y2="0" stroke-width="3.4" transform="rotate(30)"/><line x1="-12.70" y1="0" x2="12.70" y2="0" stroke-width="3.4" transform="rotate(90)"/><line x1="-12.70" y1="0" x2="12.70" y2="0" stroke-width="3.4" transform="rotate(150)"/><circle r="3.6" stroke-width="3" fill="#fff"/></g><g transform="translate(-0.7,85.4)"><line x1="71.8" y1="24" x2="75" y2="33" stroke="#8a8a8a" stroke-width="1.6"/><line x1="85" y1="22" x2="83.5" y2="33" stroke="#8a8a8a" stroke-width="1.6"/><circle cx="71.2" cy="22.8" r="2.9" fill="#33347e"/><circle cx="85.2" cy="20.4" r="2.9" fill="#33347e"/><path d="M68,31.8 H90.7 C91,42 88,51.5 79.3,51.5 C70.5,51.5 67.6,42 68,31.8Z" fill="#30307c"/><circle cx="74.2" cy="39.2" r="3.2" fill="none" stroke="#3a90c6" stroke-width="2"/><circle cx="84" cy="39.2" r="3.2" fill="none" stroke="#3a90c6" stroke-width="2"/><rect x="78.2" y="51.3" width="2.2" height="4.6" fill="#7a8aa0"/><rect x="73" y="55.4" width="12.6" height="2.6" rx="1" fill="#7ab8da"/></g><g transform="translate(110.3,124.5)" stroke="#4a98ca" fill="none"><circle r="15.90" stroke-width="3.6" stroke-dasharray="2.775 2.775"/><circle r="12.70" stroke-width="3.8"/><line x1="-12.70" y1="0" x2="12.70" y2="0" stroke-width="3.4" transform="rotate(30)"/><line x1="-12.70" y1="0" x2="12.70" y2="0" stroke-width="3.4" transform="rotate(90)"/><line x1="-12.70" y1="0" x2="12.70" y2="0" stroke-width="3.4" transform="rotate(150)"/><circle r="3.6" stroke-width="3" fill="#fff"/></g><g transform="translate(15.3,164.5)" stroke="#52aae2" fill="none"><circle r="13.50" stroke-width="3.6" stroke-dasharray="2.356 2.356"/><circle r="10.30" stroke-width="3.8"/><line x1="-10.30" y1="0" x2="10.30" y2="0" stroke-width="3.4" transform="rotate(30)"/><line x1="-10.30" y1="0" x2="10.30" y2="0" stroke-width="3.4" transform="rotate(90)"/><line x1="-10.30" y1="0" x2="10.30" y2="0" stroke-width="3.4" transform="rotate(150)"/><circle r="3.6" stroke-width="3" fill="#fff"/></g><g transform="translate(-1.0,84.2)"><line x1="45.4" y1="66" x2="45" y2="75" stroke="#8a8a8a" stroke-width="1.6"/><circle cx="45.5" cy="64.8" r="2.6" fill="#2b7f9a"/><path d="M35,74.6 H54.6 C55,84 52,92.9 44.8,92.9 C37.6,92.9 34.6,84 35,74.6Z" fill="#2b7f9a"/><circle cx="40.6" cy="80.6" r="1.8" fill="#1a2a4a"/><circle cx="49.2" cy="80.6" r="1.8" fill="#1a2a4a"/><rect x="43.8" y="92.7" width="2.2" height="4.4" fill="#7a909a"/><rect x="39.4" y="96.8" width="11" height="2.4" rx="1" fill="#5a9ab0"/></g><g transform="translate(79.8,166.5)" stroke="#8c7a52" fill="none"><circle r="13.50" stroke-width="3.6" stroke-dasharray="2.356 2.356"/><circle r="10.30" stroke-width="3.8"/><line x1="-10.30" y1="0" x2="10.30" y2="0" stroke-width="3.4" transform="rotate(30)"/><line x1="-10.30" y1="0" x2="10.30" y2="0" stroke-width="3.4" transform="rotate(90)"/><line x1="-10.30" y1="0" x2="10.30" y2="0" stroke-width="3.4" transform="rotate(150)"/><circle r="3.6" stroke-width="3" fill="#fff"/></g><g transform="translate(-1.0,84.2)"><line x1="105" y1="65" x2="108" y2="75" stroke="#9a9a9a" stroke-width="1.6"/><line x1="118.4" y1="65" x2="116" y2="75" stroke="#9a9a9a" stroke-width="1.6"/><circle cx="104.8" cy="64.2" r="2.8" fill="#8a3c1a"/><circle cx="118.4" cy="64.2" r="2.8" fill="#8a3c1a"/><circle cx="112.1" cy="83.7" r="11" fill="#7a3c10"/><circle cx="107.4" cy="81.8" r="3" fill="#4a4a2a" stroke="#a08a52" stroke-width="1.6"/><circle cx="117" cy="81.8" r="3" fill="#4a4a2a" stroke="#a08a52" stroke-width="1.6"/><rect x="111" y="94.4" width="2.2" height="5.4" fill="#9a9a9a"/><rect x="106.4" y="99.6" width="12" height="2.6" rx="1" fill="#c8c2a4"/></g><g transform="translate(-1.7,169.60000000000002)"><line x1="6.2" y1="21.5" x2="7.8" y2="30" stroke="#8a8a8a" stroke-width="1.6"/><line x1="18.6" y1="21.5" x2="17" y2="30" stroke="#8a8a8a" stroke-width="1.6"/><circle cx="5.8" cy="20.6" r="2.7" fill="#2f8f3a"/><circle cx="18.8" cy="20.6" r="2.7" fill="#2f8f3a"/><rect x="2.7" y="28.7" width="19.6" height="19.6" fill="#2e8b2e"/><circle cx="8.8" cy="36" r="3.1" fill="none" stroke="#46e000" stroke-width="2"/><circle cx="16.8" cy="36" r="3.1" fill="none" stroke="#46e000" stroke-width="2"/><rect x="11.4" y="48.3" width="2.2" height="4.6" fill="#7a9a7a"/><rect x="7.4" y="52.4" width="11" height="2.6" rx="1" fill="#3aa63a"/></g><g transform="translate(43.4,207.9)" stroke="#46de00" fill="none"><circle r="15.90" stroke-width="3.6" stroke-dasharray="2.775 2.775"/><circle r="12.70" stroke-width="3.8"/><line x1="-12.70" y1="0" x2="12.70" y2="0" stroke-width="3.4" transform="rotate(30)"/><line x1="-12.70" y1="0" x2="12.70" y2="0" stroke-width="3.4" transform="rotate(90)"/><line x1="-12.70" y1="0" x2="12.70" y2="0" stroke-width="3.4" transform="rotate(150)"/><circle r="3.6" stroke-width="3" fill="#fff"/></g><g transform="translate(-1.7,169.60000000000002)"><line x1="71.8" y1="24" x2="75" y2="33" stroke="#8a8a8a" stroke-width="1.6"/><line x1="85" y1="22" x2="83.5" y2="33" stroke="#8a8a8a" stroke-width="1.6"/><circle cx="71.2" cy="22.8" r="2.9" fill="#33347e"/><circle cx="85.2" cy="20.4" r="2.9" fill="#33347e"/><path d="M68,31.8 H90.7 C91,42 88,51.5 79.3,51.5 C70.5,51.5 67.6,42 68,31.8Z" fill="#30307c"/><circle cx="74.2" cy="39.2" r="3.2" fill="none" stroke="#3a90c6" stroke-width="2"/><circle cx="84" cy="39.2" r="3.2" fill="none" stroke="#3a90c6" stroke-width="2"/><rect x="78.2" y="51.3" width="2.2" height="4.6" fill="#7a8aa0"/><rect x="73" y="55.4" width="12.6" height="2.6" rx="1" fill="#7ab8da"/></g><g transform="translate(109.3,208.70000000000002)" stroke="#4a98ca" fill="none"><circle r="15.90" stroke-width="3.6" stroke-dasharray="2.775 2.775"/><circle r="12.70" stroke-width="3.8"/><line x1="-12.70" y1="0" x2="12.70" y2="0" stroke-width="3.4" transform="rotate(30)"/><line x1="-12.70" y1="0" x2="12.70" y2="0" stroke-width="3.4" transform="rotate(90)"/><line x1="-12.70" y1="0" x2="12.70" y2="0" stroke-width="3.4" transform="rotate(150)"/><circle r="3.6" stroke-width="3" fill="#fff"/></g><g transform="translate(64.00000000000001,-39.8)"><path d="M68,31.8 H90.7 C91,42 88,51.5 79.3,51.5 C70.5,51.5 67.6,42 68,31.8Z" fill="#30307c"/><rect x="78.2" y="51.3" width="2.2" height="4.6" fill="#7a8aa0"/></g><g transform="translate(174.4,-1.5)" stroke="#4a98ca" fill="none"><circle r="15.90" stroke-width="3.6" stroke-dasharray="2.775 2.775"/><circle r="12.70" stroke-width="3.8"/><line x1="-12.70" y1="0" x2="12.70" y2="0" stroke-width="3.4" transform="rotate(30)"/><line x1="-12.70" y1="0" x2="12.70" y2="0" stroke-width="3.4" transform="rotate(90)"/><line x1="-12.70" y1="0" x2="12.70" y2="0" stroke-width="3.4" transform="rotate(150)"/><circle r="3.6" stroke-width="3" fill="#fff"/></g><g transform="translate(193.9,-39.8)"><rect x="2.7" y="28.7" width="19.6" height="19.6" fill="#2e8b2e"/><rect x="11.4" y="48.3" width="2.2" height="4.6" fill="#7a9a7a"/><rect x="7.4" y="52.4" width="11" height="2.6" rx="1" fill="#3aa63a"/></g><g transform="translate(240.3,-0.7)" stroke="#46de00" fill="none"><circle r="15.90" stroke-width="3.6" stroke-dasharray="2.775 2.775"/><circle r="12.70" stroke-width="3.8"/><line x1="-12.70" y1="0" x2="12.70" y2="0" stroke-width="3.4" transform="rotate(30)"/><line x1="-12.70" y1="0" x2="12.70" y2="0" stroke-width="3.4" transform="rotate(90)"/><line x1="-12.70" y1="0" x2="12.70" y2="0" stroke-width="3.4" transform="rotate(150)"/><circle r="3.6" stroke-width="3" fill="#fff"/></g><g transform="translate(129.3,0.0)"><line x1="6.2" y1="21.5" x2="7.8" y2="30" stroke="#8a8a8a" stroke-width="1.6"/><line x1="18.6" y1="21.5" x2="17" y2="30" stroke="#8a8a8a" stroke-width="1.6"/><circle cx="5.8" cy="20.6" r="2.7" fill="#2f8f3a"/><circle cx="18.8" cy="20.6" r="2.7" fill="#2f8f3a"/><rect x="2.7" y="28.7" width="19.6" height="19.6" fill="#2e8b2e"/><circle cx="8.8" cy="36" r="3.1" fill="none" stroke="#46e000" stroke-width="2"/><circle cx="16.8" cy="36" r="3.1" fill="none" stroke="#46e000" stroke-width="2"/><rect x="11.4" y="48.3" width="2.2" height="4.6" fill="#7a9a7a"/><rect x="7.4" y="52.4" width="11" height="2.6" rx="1" fill="#3aa63a"/></g><g transform="translate(174.4,38.3)" stroke="#46de00" fill="none"><circle r="15.90" stroke-width="3.6" stroke-dasharray="2.775 2.775"/><circle r="12.70" stroke-width="3.8"/><line x1="-12.70" y1="0" x2="12.70" y2="0" stroke-width="3.4" transform="rotate(30)"/><line x1="-12.70" y1="0" x2="12.70" y2="0" stroke-width="3.4" transform="rotate(90)"/><line x1="-12.70" y1="0" x2="12.70" y2="0" stroke-width="3.4" transform="rotate(150)"/><circle r="3.6" stroke-width="3" fill="#fff"/></g><g transform="translate(129.3,0.0)"><line x1="71.8" y1="24" x2="75" y2="33" stroke="#8a8a8a" stroke-width="1.6"/><line x1="85" y1="22" x2="83.5" y2="33" stroke="#8a8a8a" stroke-width="1.6"/><circle cx="71.2" cy="22.8" r="2.9" fill="#33347e"/><circle cx="85.2" cy="20.4" r="2.9" fill="#33347e"/><path d="M68,31.8 H90.7 C91,42 88,51.5 79.3,51.5 C70.5,51.5 67.6,42 68,31.8Z" fill="#30307c"/><circle cx="74.2" cy="39.2" r="3.2" fill="none" stroke="#3a90c6" stroke-width="2"/><circle cx="84" cy="39.2" r="3.2" fill="none" stroke="#3a90c6" stroke-width="2"/><rect x="78.2" y="51.3" width="2.2" height="4.6" fill="#7a8aa0"/><rect x="73" y="55.4" width="12.6" height="2.6" rx="1" fill="#7ab8da"/></g><g transform="translate(240.3,39.099999999999994)" stroke="#4a98ca" fill="none"><circle r="15.90" stroke-width="3.6" stroke-dasharray="2.775 2.775"/><circle r="12.70" stroke-width="3.8"/><line x1="-12.70" y1="0" x2="12.70" y2="0" stroke-width="3.4" transform="rotate(30)"/><line x1="-12.70" y1="0" x2="12.70" y2="0" stroke-width="3.4" transform="rotate(90)"/><line x1="-12.70" y1="0" x2="12.70" y2="0" stroke-width="3.4" transform="rotate(150)"/><circle r="3.6" stroke-width="3" fill="#fff"/></g><g transform="translate(145.60000000000002,80.3)" stroke="#52aae2" fill="none"><circle r="13.50" stroke-width="3.6" stroke-dasharray="2.356 2.356"/><circle r="10.30" stroke-width="3.8"/><line x1="-10.30" y1="0" x2="10.30" y2="0" stroke-width="3.4" transform="rotate(30)"/><line x1="-10.30" y1="0" x2="10.30" y2="0" stroke-width="3.4" transform="rotate(90)"/><line x1="-10.30" y1="0" x2="10.30" y2="0" stroke-width="3.4" transform="rotate(150)"/><circle r="3.6" stroke-width="3" fill="#fff"/></g><g transform="translate(129.3,0.0)"><line x1="45.4" y1="66" x2="45" y2="75" stroke="#8a8a8a" stroke-width="1.6"/><circle cx="45.5" cy="64.8" r="2.6" fill="#2b7f9a"/><path d="M35,74.6 H54.6 C55,84 52,92.9 44.8,92.9 C37.6,92.9 34.6,84 35,74.6Z" fill="#2b7f9a"/><circle cx="40.6" cy="80.6" r="1.8" fill="#1a2a4a"/><circle cx="49.2" cy="80.6" r="1.8" fill="#1a2a4a"/><rect x="43.8" y="92.7" width="2.2" height="4.4" fill="#7a909a"/><rect x="39.4" y="96.8" width="11" height="2.4" rx="1" fill="#5a9ab0"/></g><g transform="translate(210.10000000000002,82.3)" stroke="#8c7a52" fill="none"><circle r="13.50" stroke-width="3.6" stroke-dasharray="2.356 2.356"/><circle r="10.30" stroke-width="3.8"/><line x1="-10.30" y1="0" x2="10.30" y2="0" stroke-width="3.4" transform="rotate(30)"/><line x1="-10.30" y1="0" x2="10.30" y2="0" stroke-width="3.4" transform="rotate(90)"/><line x1="-10.30" y1="0" x2="10.30" y2="0" stroke-width="3.4" transform="rotate(150)"/><circle r="3.6" stroke-width="3" fill="#fff"/></g><g transform="translate(129.3,0.0)"><line x1="105" y1="65" x2="108" y2="75" stroke="#9a9a9a" stroke-width="1.6"/><line x1="118.4" y1="65" x2="116" y2="75" stroke="#9a9a9a" stroke-width="1.6"/><circle cx="104.8" cy="64.2" r="2.8" fill="#8a3c1a"/><circle cx="118.4" cy="64.2" r="2.8" fill="#8a3c1a"/><circle cx="112.1" cy="83.7" r="11" fill="#7a3c10"/><circle cx="107.4" cy="81.8" r="3" fill="#4a4a2a" stroke="#a08a52" stroke-width="1.6"/><circle cx="117" cy="81.8" r="3" fill="#4a4a2a" stroke="#a08a52" stroke-width="1.6"/><rect x="111" y="94.4" width="2.2" height="5.4" fill="#9a9a9a"/><rect x="106.4" y="99.6" width="12" height="2.6" rx="1" fill="#c8c2a4"/></g><g transform="translate(128.60000000000002,85.4)"><line x1="6.2" y1="21.5" x2="7.8" y2="30" stroke="#8a8a8a" stroke-width="1.6"/><line x1="18.6" y1="21.5" x2="17" y2="30" stroke="#8a8a8a" stroke-width="1.6"/><circle cx="5.8" cy="20.6" r="2.7" fill="#2f8f3a"/><circle cx="18.8" cy="20.6" r="2.7" fill="#2f8f3a"/><rect x="2.7" y="28.7" width="19.6" height="19.6" fill="#2e8b2e"/><circle cx="8.8" cy="36" r="3.1" fill="none" stroke="#46e000" stroke-width="2"/><circle cx="16.8" cy="36" r="3.1" fill="none" stroke="#46e000" stroke-width="2"/><rect x="11.4" y="48.3" width="2.2" height="4.6" fill="#7a9a7a"/><rect x="7.4" y="52.4" width="11" height="2.6" rx="1" fill="#3aa63a"/></g><g transform="translate(173.70000000000002,123.7)" stroke="#46de00" fill="none"><circle r="15.90" stroke-width="3.6" stroke-dasharray="2.775 2.775"/><circle r="12.70" stroke-width="3.8"/><line x1="-12.70" y1="0" x2="12.70" y2="0" stroke-width="3.4" transform="rotate(30)"/><line x1="-12.70" y1="0" x2="12.70" y2="0" stroke-width="3.4" transform="rotate(90)"/><line x1="-12.70" y1="0" x2="12.70" y2="0" stroke-width="3.4" transform="rotate(150)"/><circle r="3.6" stroke-width="3" fill="#fff"/></g><g transform="translate(128.60000000000002,85.4)"><line x1="71.8" y1="24" x2="75" y2="33" stroke="#8a8a8a" stroke-width="1.6"/><line x1="85" y1="22" x2="83.5" y2="33" stroke="#8a8a8a" stroke-width="1.6"/><circle cx="71.2" cy="22.8" r="2.9" fill="#33347e"/><circle cx="85.2" cy="20.4" r="2.9" fill="#33347e"/><path d="M68,31.8 H90.7 C91,42 88,51.5 79.3,51.5 C70.5,51.5 67.6,42 68,31.8Z" fill="#30307c"/><circle cx="74.2" cy="39.2" r="3.2" fill="none" stroke="#3a90c6" stroke-width="2"/><circle cx="84" cy="39.2" r="3.2" fill="none" stroke="#3a90c6" stroke-width="2"/><rect x="78.2" y="51.3" width="2.2" height="4.6" fill="#7a8aa0"/><rect x="73" y="55.4" width="12.6" height="2.6" rx="1" fill="#7ab8da"/></g><g transform="translate(239.60000000000002,124.5)" stroke="#4a98ca" fill="none"><circle r="15.90" stroke-width="3.6" stroke-dasharray="2.775 2.775"/><circle r="12.70" stroke-width="3.8"/><line x1="-12.70" y1="0" x2="12.70" y2="0" stroke-width="3.4" transform="rotate(30)"/><line x1="-12.70" y1="0" x2="12.70" y2="0" stroke-width="3.4" transform="rotate(90)"/><line x1="-12.70" y1="0" x2="12.70" y2="0" stroke-width="3.4" transform="rotate(150)"/><circle r="3.6" stroke-width="3" fill="#fff"/></g><g transform="translate(144.60000000000002,164.5)" stroke="#52aae2" fill="none"><circle r="13.50" stroke-width="3.6" stroke-dasharray="2.356 2.356"/><circle r="10.30" stroke-width="3.8"/><line x1="-10.30" y1="0" x2="10.30" y2="0" stroke-width="3.4" transform="rotate(30)"/><line x1="-10.30" y1="0" x2="10.30" y2="0" stroke-width="3.4" transform="rotate(90)"/><line x1="-10.30" y1="0" x2="10.30" y2="0" stroke-width="3.4" transform="rotate(150)"/><circle r="3.6" stroke-width="3" fill="#fff"/></g><g transform="translate(128.3,84.2)"><line x1="45.4" y1="66" x2="45" y2="75" stroke="#8a8a8a" stroke-width="1.6"/><circle cx="45.5" cy="64.8" r="2.6" fill="#2b7f9a"/><path d="M35,74.6 H54.6 C55,84 52,92.9 44.8,92.9 C37.6,92.9 34.6,84 35,74.6Z" fill="#2b7f9a"/><circle cx="40.6" cy="80.6" r="1.8" fill="#1a2a4a"/><circle cx="49.2" cy="80.6" r="1.8" fill="#1a2a4a"/><rect x="43.8" y="92.7" width="2.2" height="4.4" fill="#7a909a"/><rect x="39.4" y="96.8" width="11" height="2.4" rx="1" fill="#5a9ab0"/></g><g transform="translate(209.10000000000002,166.5)" stroke="#8c7a52" fill="none"><circle r="13.50" stroke-width="3.6" stroke-dasharray="2.356 2.356"/><circle r="10.30" stroke-width="3.8"/><line x1="-10.30" y1="0" x2="10.30" y2="0" stroke-width="3.4" transform="rotate(30)"/><line x1="-10.30" y1="0" x2="10.30" y2="0" stroke-width="3.4" transform="rotate(90)"/><line x1="-10.30" y1="0" x2="10.30" y2="0" stroke-width="3.4" transform="rotate(150)"/><circle r="3.6" stroke-width="3" fill="#fff"/></g><g transform="translate(128.3,84.2)"><line x1="105" y1="65" x2="108" y2="75" stroke="#9a9a9a" stroke-width="1.6"/><line x1="118.4" y1="65" x2="116" y2="75" stroke="#9a9a9a" stroke-width="1.6"/><circle cx="104.8" cy="64.2" r="2.8" fill="#8a3c1a"/><circle cx="118.4" cy="64.2" r="2.8" fill="#8a3c1a"/><circle cx="112.1" cy="83.7" r="11" fill="#7a3c10"/><circle cx="107.4" cy="81.8" r="3" fill="#4a4a2a" stroke="#a08a52" stroke-width="1.6"/><circle cx="117" cy="81.8" r="3" fill="#4a4a2a" stroke="#a08a52" stroke-width="1.6"/><rect x="111" y="94.4" width="2.2" height="5.4" fill="#9a9a9a"/><rect x="106.4" y="99.6" width="12" height="2.6" rx="1" fill="#c8c2a4"/></g><g transform="translate(127.60000000000001,169.60000000000002)"><line x1="6.2" y1="21.5" x2="7.8" y2="30" stroke="#8a8a8a" stroke-width="1.6"/><line x1="18.6" y1="21.5" x2="17" y2="30" stroke="#8a8a8a" stroke-width="1.6"/><circle cx="5.8" cy="20.6" r="2.7" fill="#2f8f3a"/><circle cx="18.8" cy="20.6" r="2.7" fill="#2f8f3a"/><rect x="2.7" y="28.7" width="19.6" height="19.6" fill="#2e8b2e"/><circle cx="8.8" cy="36" r="3.1" fill="none" stroke="#46e000" stroke-width="2"/><circle cx="16.8" cy="36" r="3.1" fill="none" stroke="#46e000" stroke-width="2"/><rect x="11.4" y="48.3" width="2.2" height="4.6" fill="#7a9a7a"/><rect x="7.4" y="52.4" width="11" height="2.6" rx="1" fill="#3aa63a"/></g><g transform="translate(172.70000000000002,207.9)" stroke="#46de00" fill="none"><circle r="15.90" stroke-width="3.6" stroke-dasharray="2.775 2.775"/><circle r="12.70" stroke-width="3.8"/><line x1="-12.70" y1="0" x2="12.70" y2="0" stroke-width="3.4" transform="rotate(30)"/><line x1="-12.70" y1="0" x2="12.70" y2="0" stroke-width="3.4" transform="rotate(90)"/><line x1="-12.70" y1="0" x2="12.70" y2="0" stroke-width="3.4" transform="rotate(150)"/><circle r="3.6" stroke-width="3" fill="#fff"/></g><g transform="translate(127.60000000000001,169.60000000000002)"><line x1="71.8" y1="24" x2="75" y2="33" stroke="#8a8a8a" stroke-width="1.6"/><line x1="85" y1="22" x2="83.5" y2="33" stroke="#8a8a8a" stroke-width="1.6"/><circle cx="71.2" cy="22.8" r="2.9" fill="#33347e"/><circle cx="85.2" cy="20.4" r="2.9" fill="#33347e"/><path d="M68,31.8 H90.7 C91,42 88,51.5 79.3,51.5 C70.5,51.5 67.6,42 68,31.8Z" fill="#30307c"/><circle cx="74.2" cy="39.2" r="3.2" fill="none" stroke="#3a90c6" stroke-width="2"/><circle cx="84" cy="39.2" r="3.2" fill="none" stroke="#3a90c6" stroke-width="2"/><rect x="78.2" y="51.3" width="2.2" height="4.6" fill="#7a8aa0"/><rect x="73" y="55.4" width="12.6" height="2.6" rx="1" fill="#7ab8da"/></g><g transform="translate(238.60000000000002,208.70000000000002)" stroke="#4a98ca" fill="none"><circle r="15.90" stroke-width="3.6" stroke-dasharray="2.775 2.775"/><circle r="12.70" stroke-width="3.8"/><line x1="-12.70" y1="0" x2="12.70" y2="0" stroke-width="3.4" transform="rotate(30)"/><line x1="-12.70" y1="0" x2="12.70" y2="0" stroke-width="3.4" transform="rotate(90)"/><line x1="-12.70" y1="0" x2="12.70" y2="0" stroke-width="3.4" transform="rotate(150)"/><circle r="3.6" stroke-width="3" fill="#fff"/></g><g transform="translate(193.3,-39.8)"><path d="M68,31.8 H90.7 C91,42 88,51.5 79.3,51.5 C70.5,51.5 67.6,42 68,31.8Z" fill="#30307c"/><rect x="78.2" y="51.3" width="2.2" height="4.6" fill="#7a8aa0"/></g><g transform="translate(303.70000000000005,-1.5)" stroke="#4a98ca" fill="none"><circle r="15.90" stroke-width="3.6" stroke-dasharray="2.775 2.775"/><circle r="12.70" stroke-width="3.8"/><line x1="-12.70" y1="0" x2="12.70" y2="0" stroke-width="3.4" transform="rotate(30)"/><line x1="-12.70" y1="0" x2="12.70" y2="0" stroke-width="3.4" transform="rotate(90)"/><line x1="-12.70" y1="0" x2="12.70" y2="0" stroke-width="3.4" transform="rotate(150)"/><circle r="3.6" stroke-width="3" fill="#fff"/></g><g transform="translate(323.20000000000005,-39.8)"><rect x="2.7" y="28.7" width="19.6" height="19.6" fill="#2e8b2e"/><rect x="11.4" y="48.3" width="2.2" height="4.6" fill="#7a9a7a"/><rect x="7.4" y="52.4" width="11" height="2.6" rx="1" fill="#3aa63a"/></g><g transform="translate(369.6,-0.7)" stroke="#46de00" fill="none"><circle r="15.90" stroke-width="3.6" stroke-dasharray="2.775 2.775"/><circle r="12.70" stroke-width="3.8"/><line x1="-12.70" y1="0" x2="12.70" y2="0" stroke-width="3.4" transform="rotate(30)"/><line x1="-12.70" y1="0" x2="12.70" y2="0" stroke-width="3.4" transform="rotate(90)"/><line x1="-12.70" y1="0" x2="12.70" y2="0" stroke-width="3.4" transform="rotate(150)"/><circle r="3.6" stroke-width="3" fill="#fff"/></g><g transform="translate(258.6,0.0)"><line x1="6.2" y1="21.5" x2="7.8" y2="30" stroke="#8a8a8a" stroke-width="1.6"/><line x1="18.6" y1="21.5" x2="17" y2="30" stroke="#8a8a8a" stroke-width="1.6"/><circle cx="5.8" cy="20.6" r="2.7" fill="#2f8f3a"/><circle cx="18.8" cy="20.6" r="2.7" fill="#2f8f3a"/><rect x="2.7" y="28.7" width="19.6" height="19.6" fill="#2e8b2e"/><circle cx="8.8" cy="36" r="3.1" fill="none" stroke="#46e000" stroke-width="2"/><circle cx="16.8" cy="36" r="3.1" fill="none" stroke="#46e000" stroke-width="2"/><rect x="11.4" y="48.3" width="2.2" height="4.6" fill="#7a9a7a"/><rect x="7.4" y="52.4" width="11" height="2.6" rx="1" fill="#3aa63a"/></g><g transform="translate(303.70000000000005,38.3)" stroke="#46de00" fill="none"><circle r="15.90" stroke-width="3.6" stroke-dasharray="2.775 2.775"/><circle r="12.70" stroke-width="3.8"/><line x1="-12.70" y1="0" x2="12.70" y2="0" stroke-width="3.4" transform="rotate(30)"/><line x1="-12.70" y1="0" x2="12.70" y2="0" stroke-width="3.4" transform="rotate(90)"/><line x1="-12.70" y1="0" x2="12.70" y2="0" stroke-width="3.4" transform="rotate(150)"/><circle r="3.6" stroke-width="3" fill="#fff"/></g><g transform="translate(258.6,0.0)"><line x1="71.8" y1="24" x2="75" y2="33" stroke="#8a8a8a" stroke-width="1.6"/><line x1="85" y1="22" x2="83.5" y2="33" stroke="#8a8a8a" stroke-width="1.6"/><circle cx="71.2" cy="22.8" r="2.9" fill="#33347e"/><circle cx="85.2" cy="20.4" r="2.9" fill="#33347e"/><path d="M68,31.8 H90.7 C91,42 88,51.5 79.3,51.5 C70.5,51.5 67.6,42 68,31.8Z" fill="#30307c"/><circle cx="74.2" cy="39.2" r="3.2" fill="none" stroke="#3a90c6" stroke-width="2"/><circle cx="84" cy="39.2" r="3.2" fill="none" stroke="#3a90c6" stroke-width="2"/><rect x="78.2" y="51.3" width="2.2" height="4.6" fill="#7a8aa0"/><rect x="73" y="55.4" width="12.6" height="2.6" rx="1" fill="#7ab8da"/></g><g transform="translate(369.6,39.099999999999994)" stroke="#4a98ca" fill="none"><circle r="15.90" stroke-width="3.6" stroke-dasharray="2.775 2.775"/><circle r="12.70" stroke-width="3.8"/><line x1="-12.70" y1="0" x2="12.70" y2="0" stroke-width="3.4" transform="rotate(30)"/><line x1="-12.70" y1="0" x2="12.70" y2="0" stroke-width="3.4" transform="rotate(90)"/><line x1="-12.70" y1="0" x2="12.70" y2="0" stroke-width="3.4" transform="rotate(150)"/><circle r="3.6" stroke-width="3" fill="#fff"/></g><g transform="translate(274.90000000000003,80.3)" stroke="#52aae2" fill="none"><circle r="13.50" stroke-width="3.6" stroke-dasharray="2.356 2.356"/><circle r="10.30" stroke-width="3.8"/><line x1="-10.30" y1="0" x2="10.30" y2="0" stroke-width="3.4" transform="rotate(30)"/><line x1="-10.30" y1="0" x2="10.30" y2="0" stroke-width="3.4" transform="rotate(90)"/><line x1="-10.30" y1="0" x2="10.30" y2="0" stroke-width="3.4" transform="rotate(150)"/><circle r="3.6" stroke-width="3" fill="#fff"/></g><g transform="translate(258.6,0.0)"><line x1="45.4" y1="66" x2="45" y2="75" stroke="#8a8a8a" stroke-width="1.6"/><circle cx="45.5" cy="64.8" r="2.6" fill="#2b7f9a"/><path d="M35,74.6 H54.6 C55,84 52,92.9 44.8,92.9 C37.6,92.9 34.6,84 35,74.6Z" fill="#2b7f9a"/><circle cx="40.6" cy="80.6" r="1.8" fill="#1a2a4a"/><circle cx="49.2" cy="80.6" r="1.8" fill="#1a2a4a"/><rect x="43.8" y="92.7" width="2.2" height="4.4" fill="#7a909a"/><rect x="39.4" y="96.8" width="11" height="2.4" rx="1" fill="#5a9ab0"/></g><g transform="translate(339.40000000000003,82.3)" stroke="#8c7a52" fill="none"><circle r="13.50" stroke-width="3.6" stroke-dasharray="2.356 2.356"/><circle r="10.30" stroke-width="3.8"/><line x1="-10.30" y1="0" x2="10.30" y2="0" stroke-width="3.4" transform="rotate(30)"/><line x1="-10.30" y1="0" x2="10.30" y2="0" stroke-width="3.4" transform="rotate(90)"/><line x1="-10.30" y1="0" x2="10.30" y2="0" stroke-width="3.4" transform="rotate(150)"/><circle r="3.6" stroke-width="3" fill="#fff"/></g><g transform="translate(258.6,0.0)"><line x1="105" y1="65" x2="108" y2="75" stroke="#9a9a9a" stroke-width="1.6"/><line x1="118.4" y1="65" x2="116" y2="75" stroke="#9a9a9a" stroke-width="1.6"/><circle cx="104.8" cy="64.2" r="2.8" fill="#8a3c1a"/><circle cx="118.4" cy="64.2" r="2.8" fill="#8a3c1a"/><circle cx="112.1" cy="83.7" r="11" fill="#7a3c10"/><circle cx="107.4" cy="81.8" r="3" fill="#4a4a2a" stroke="#a08a52" stroke-width="1.6"/><circle cx="117" cy="81.8" r="3" fill="#4a4a2a" stroke="#a08a52" stroke-width="1.6"/><rect x="111" y="94.4" width="2.2" height="5.4" fill="#9a9a9a"/><rect x="106.4" y="99.6" width="12" height="2.6" rx="1" fill="#c8c2a4"/></g><g transform="translate(257.90000000000003,85.4)"><line x1="6.2" y1="21.5" x2="7.8" y2="30" stroke="#8a8a8a" stroke-width="1.6"/><line x1="18.6" y1="21.5" x2="17" y2="30" stroke="#8a8a8a" stroke-width="1.6"/><circle cx="5.8" cy="20.6" r="2.7" fill="#2f8f3a"/><circle cx="18.8" cy="20.6" r="2.7" fill="#2f8f3a"/><rect x="2.7" y="28.7" width="19.6" height="19.6" fill="#2e8b2e"/><circle cx="8.8" cy="36" r="3.1" fill="none" stroke="#46e000" stroke-width="2"/><circle cx="16.8" cy="36" r="3.1" fill="none" stroke="#46e000" stroke-width="2"/><rect x="11.4" y="48.3" width="2.2" height="4.6" fill="#7a9a7a"/><rect x="7.4" y="52.4" width="11" height="2.6" rx="1" fill="#3aa63a"/></g><g transform="translate(303.00000000000006,123.7)" stroke="#46de00" fill="none"><circle r="15.90" stroke-width="3.6" stroke-dasharray="2.775 2.775"/><circle r="12.70" stroke-width="3.8"/><line x1="-12.70" y1="0" x2="12.70" y2="0" stroke-width="3.4" transform="rotate(30)"/><line x1="-12.70" y1="0" x2="12.70" y2="0" stroke-width="3.4" transform="rotate(90)"/><line x1="-12.70" y1="0" x2="12.70" y2="0" stroke-width="3.4" transform="rotate(150)"/><circle r="3.6" stroke-width="3" fill="#fff"/></g><g transform="translate(257.90000000000003,85.4)"><line x1="71.8" y1="24" x2="75" y2="33" stroke="#8a8a8a" stroke-width="1.6"/><line x1="85" y1="22" x2="83.5" y2="33" stroke="#8a8a8a" stroke-width="1.6"/><circle cx="71.2" cy="22.8" r="2.9" fill="#33347e"/><circle cx="85.2" cy="20.4" r="2.9" fill="#33347e"/><path d="M68,31.8 H90.7 C91,42 88,51.5 79.3,51.5 C70.5,51.5 67.6,42 68,31.8Z" fill="#30307c"/><circle cx="74.2" cy="39.2" r="3.2" fill="none" stroke="#3a90c6" stroke-width="2"/><circle cx="84" cy="39.2" r="3.2" fill="none" stroke="#3a90c6" stroke-width="2"/><rect x="78.2" y="51.3" width="2.2" height="4.6" fill="#7a8aa0"/><rect x="73" y="55.4" width="12.6" height="2.6" rx="1" fill="#7ab8da"/></g><g transform="translate(368.90000000000003,124.5)" stroke="#4a98ca" fill="none"><circle r="15.90" stroke-width="3.6" stroke-dasharray="2.775 2.775"/><circle r="12.70" stroke-width="3.8"/><line x1="-12.70" y1="0" x2="12.70" y2="0" stroke-width="3.4" transform="rotate(30)"/><line x1="-12.70" y1="0" x2="12.70" y2="0" stroke-width="3.4" transform="rotate(90)"/><line x1="-12.70" y1="0" x2="12.70" y2="0" stroke-width="3.4" transform="rotate(150)"/><circle r="3.6" stroke-width="3" fill="#fff"/></g><g transform="translate(273.90000000000003,164.5)" stroke="#52aae2" fill="none"><circle r="13.50" stroke-width="3.6" stroke-dasharray="2.356 2.356"/><circle r="10.30" stroke-width="3.8"/><line x1="-10.30" y1="0" x2="10.30" y2="0" stroke-width="3.4" transform="rotate(30)"/><line x1="-10.30" y1="0" x2="10.30" y2="0" stroke-width="3.4" transform="rotate(90)"/><line x1="-10.30" y1="0" x2="10.30" y2="0" stroke-width="3.4" transform="rotate(150)"/><circle r="3.6" stroke-width="3" fill="#fff"/></g><g transform="translate(257.6,84.2)"><line x1="45.4" y1="66" x2="45" y2="75" stroke="#8a8a8a" stroke-width="1.6"/><circle cx="45.5" cy="64.8" r="2.6" fill="#2b7f9a"/><path d="M35,74.6 H54.6 C55,84 52,92.9 44.8,92.9 C37.6,92.9 34.6,84 35,74.6Z" fill="#2b7f9a"/><circle cx="40.6" cy="80.6" r="1.8" fill="#1a2a4a"/><circle cx="49.2" cy="80.6" r="1.8" fill="#1a2a4a"/><rect x="43.8" y="92.7" width="2.2" height="4.4" fill="#7a909a"/><rect x="39.4" y="96.8" width="11" height="2.4" rx="1" fill="#5a9ab0"/></g><g transform="translate(338.40000000000003,166.5)" stroke="#8c7a52" fill="none"><circle r="13.50" stroke-width="3.6" stroke-dasharray="2.356 2.356"/><circle r="10.30" stroke-width="3.8"/><line x1="-10.30" y1="0" x2="10.30" y2="0" stroke-width="3.4" transform="rotate(30)"/><line x1="-10.30" y1="0" x2="10.30" y2="0" stroke-width="3.4" transform="rotate(90)"/><line x1="-10.30" y1="0" x2="10.30" y2="0" stroke-width="3.4" transform="rotate(150)"/><circle r="3.6" stroke-width="3" fill="#fff"/></g><g transform="translate(257.6,84.2)"><line x1="105" y1="65" x2="108" y2="75" stroke="#9a9a9a" stroke-width="1.6"/><line x1="118.4" y1="65" x2="116" y2="75" stroke="#9a9a9a" stroke-width="1.6"/><circle cx="104.8" cy="64.2" r="2.8" fill="#8a3c1a"/><circle cx="118.4" cy="64.2" r="2.8" fill="#8a3c1a"/><circle cx="112.1" cy="83.7" r="11" fill="#7a3c10"/><circle cx="107.4" cy="81.8" r="3" fill="#4a4a2a" stroke="#a08a52" stroke-width="1.6"/><circle cx="117" cy="81.8" r="3" fill="#4a4a2a" stroke="#a08a52" stroke-width="1.6"/><rect x="111" y="94.4" width="2.2" height="5.4" fill="#9a9a9a"/><rect x="106.4" y="99.6" width="12" height="2.6" rx="1" fill="#c8c2a4"/></g><g transform="translate(256.90000000000003,169.60000000000002)"><line x1="6.2" y1="21.5" x2="7.8" y2="30" stroke="#8a8a8a" stroke-width="1.6"/><line x1="18.6" y1="21.5" x2="17" y2="30" stroke="#8a8a8a" stroke-width="1.6"/><circle cx="5.8" cy="20.6" r="2.7" fill="#2f8f3a"/><circle cx="18.8" cy="20.6" r="2.7" fill="#2f8f3a"/><rect x="2.7" y="28.7" width="19.6" height="19.6" fill="#2e8b2e"/><circle cx="8.8" cy="36" r="3.1" fill="none" stroke="#46e000" stroke-width="2"/><circle cx="16.8" cy="36" r="3.1" fill="none" stroke="#46e000" stroke-width="2"/><rect x="11.4" y="48.3" width="2.2" height="4.6" fill="#7a9a7a"/><rect x="7.4" y="52.4" width="11" height="2.6" rx="1" fill="#3aa63a"/></g><g transform="translate(302.00000000000006,207.9)" stroke="#46de00" fill="none"><circle r="15.90" stroke-width="3.6" stroke-dasharray="2.775 2.775"/><circle r="12.70" stroke-width="3.8"/><line x1="-12.70" y1="0" x2="12.70" y2="0" stroke-width="3.4" transform="rotate(30)"/><line x1="-12.70" y1="0" x2="12.70" y2="0" stroke-width="3.4" transform="rotate(90)"/><line x1="-12.70" y1="0" x2="12.70" y2="0" stroke-width="3.4" transform="rotate(150)"/><circle r="3.6" stroke-width="3" fill="#fff"/></g><g transform="translate(256.90000000000003,169.60000000000002)"><line x1="71.8" y1="24" x2="75" y2="33" stroke="#8a8a8a" stroke-width="1.6"/><line x1="85" y1="22" x2="83.5" y2="33" stroke="#8a8a8a" stroke-width="1.6"/><circle cx="71.2" cy="22.8" r="2.9" fill="#33347e"/><circle cx="85.2" cy="20.4" r="2.9" fill="#33347e"/><path d="M68,31.8 H90.7 C91,42 88,51.5 79.3,51.5 C70.5,51.5 67.6,42 68,31.8Z" fill="#30307c"/><circle cx="74.2" cy="39.2" r="3.2" fill="none" stroke="#3a90c6" stroke-width="2"/><circle cx="84" cy="39.2" r="3.2" fill="none" stroke="#3a90c6" stroke-width="2"/><rect x="78.2" y="51.3" width="2.2" height="4.6" fill="#7a8aa0"/><rect x="73" y="55.4" width="12.6" height="2.6" rx="1" fill="#7ab8da"/></g><g transform="translate(367.90000000000003,208.70000000000002)" stroke="#4a98ca" fill="none"><circle r="15.90" stroke-width="3.6" stroke-dasharray="2.775 2.775"/><circle r="12.70" stroke-width="3.8"/><line x1="-12.70" y1="0" x2="12.70" y2="0" stroke-width="3.4" transform="rotate(30)"/><line x1="-12.70" y1="0" x2="12.70" y2="0" stroke-width="3.4" transform="rotate(90)"/><line x1="-12.70" y1="0" x2="12.70" y2="0" stroke-width="3.4" transform="rotate(150)"/><circle r="3.6" stroke-width="3" fill="#fff"/></g><g transform="translate(322.6,-39.8)"><path d="M68,31.8 H90.7 C91,42 88,51.5 79.3,51.5 C70.5,51.5 67.6,42 68,31.8Z" fill="#30307c"/><rect x="78.2" y="51.3" width="2.2" height="4.6" fill="#7a8aa0"/></g><g transform="translate(433.00000000000006,-1.5)" stroke="#4a98ca" fill="none"><circle r="15.90" stroke-width="3.6" stroke-dasharray="2.775 2.775"/><circle r="12.70" stroke-width="3.8"/><line x1="-12.70" y1="0" x2="12.70" y2="0" stroke-width="3.4" transform="rotate(30)"/><line x1="-12.70" y1="0" x2="12.70" y2="0" stroke-width="3.4" transform="rotate(90)"/><line x1="-12.70" y1="0" x2="12.70" y2="0" stroke-width="3.4" transform="rotate(150)"/><circle r="3.6" stroke-width="3" fill="#fff"/></g><g transform="translate(452.5,-39.8)"><rect x="2.7" y="28.7" width="19.6" height="19.6" fill="#2e8b2e"/><rect x="11.4" y="48.3" width="2.2" height="4.6" fill="#7a9a7a"/><rect x="7.4" y="52.4" width="11" height="2.6" rx="1" fill="#3aa63a"/></g><g transform="translate(498.90000000000003,-0.7)" stroke="#46de00" fill="none"><circle r="15.90" stroke-width="3.6" stroke-dasharray="2.775 2.775"/><circle r="12.70" stroke-width="3.8"/><line x1="-12.70" y1="0" x2="12.70" y2="0" stroke-width="3.4" transform="rotate(30)"/><line x1="-12.70" y1="0" x2="12.70" y2="0" stroke-width="3.4" transform="rotate(90)"/><line x1="-12.70" y1="0" x2="12.70" y2="0" stroke-width="3.4" transform="rotate(150)"/><circle r="3.6" stroke-width="3" fill="#fff"/></g><g transform="translate(387.90000000000003,0.0)"><line x1="6.2" y1="21.5" x2="7.8" y2="30" stroke="#8a8a8a" stroke-width="1.6"/><line x1="18.6" y1="21.5" x2="17" y2="30" stroke="#8a8a8a" stroke-width="1.6"/><circle cx="5.8" cy="20.6" r="2.7" fill="#2f8f3a"/><circle cx="18.8" cy="20.6" r="2.7" fill="#2f8f3a"/><rect x="2.7" y="28.7" width="19.6" height="19.6" fill="#2e8b2e"/><circle cx="8.8" cy="36" r="3.1" fill="none" stroke="#46e000" stroke-width="2"/><circle cx="16.8" cy="36" r="3.1" fill="none" stroke="#46e000" stroke-width="2"/><rect x="11.4" y="48.3" width="2.2" height="4.6" fill="#7a9a7a"/><rect x="7.4" y="52.4" width="11" height="2.6" rx="1" fill="#3aa63a"/></g><g transform="translate(433.00000000000006,38.3)" stroke="#46de00" fill="none"><circle r="15.90" stroke-width="3.6" stroke-dasharray="2.775 2.775"/><circle r="12.70" stroke-width="3.8"/><line x1="-12.70" y1="0" x2="12.70" y2="0" stroke-width="3.4" transform="rotate(30)"/><line x1="-12.70" y1="0" x2="12.70" y2="0" stroke-width="3.4" transform="rotate(90)"/><line x1="-12.70" y1="0" x2="12.70" y2="0" stroke-width="3.4" transform="rotate(150)"/><circle r="3.6" stroke-width="3" fill="#fff"/></g><g transform="translate(387.90000000000003,0.0)"><line x1="71.8" y1="24" x2="75" y2="33" stroke="#8a8a8a" stroke-width="1.6"/><line x1="85" y1="22" x2="83.5" y2="33" stroke="#8a8a8a" stroke-width="1.6"/><circle cx="71.2" cy="22.8" r="2.9" fill="#33347e"/><circle cx="85.2" cy="20.4" r="2.9" fill="#33347e"/><path d="M68,31.8 H90.7 C91,42 88,51.5 79.3,51.5 C70.5,51.5 67.6,42 68,31.8Z" fill="#30307c"/><circle cx="74.2" cy="39.2" r="3.2" fill="none" stroke="#3a90c6" stroke-width="2"/><circle cx="84" cy="39.2" r="3.2" fill="none" stroke="#3a90c6" stroke-width="2"/><rect x="78.2" y="51.3" width="2.2" height="4.6" fill="#7a8aa0"/><rect x="73" y="55.4" width="12.6" height="2.6" rx="1" fill="#7ab8da"/></g><g transform="translate(498.90000000000003,39.099999999999994)" stroke="#4a98ca" fill="none"><circle r="15.90" stroke-width="3.6" stroke-dasharray="2.775 2.775"/><circle r="12.70" stroke-width="3.8"/><line x1="-12.70" y1="0" x2="12.70" y2="0" stroke-width="3.4" transform="rotate(30)"/><line x1="-12.70" y1="0" x2="12.70" y2="0" stroke-width="3.4" transform="rotate(90)"/><line x1="-12.70" y1="0" x2="12.70" y2="0" stroke-width="3.4" transform="rotate(150)"/><circle r="3.6" stroke-width="3" fill="#fff"/></g><g transform="translate(404.20000000000005,80.3)" stroke="#52aae2" fill="none"><circle r="13.50" stroke-width="3.6" stroke-dasharray="2.356 2.356"/><circle r="10.30" stroke-width="3.8"/><line x1="-10.30" y1="0" x2="10.30" y2="0" stroke-width="3.4" transform="rotate(30)"/><line x1="-10.30" y1="0" x2="10.30" y2="0" stroke-width="3.4" transform="rotate(90)"/><line x1="-10.30" y1="0" x2="10.30" y2="0" stroke-width="3.4" transform="rotate(150)"/><circle r="3.6" stroke-width="3" fill="#fff"/></g><g transform="translate(387.90000000000003,0.0)"><line x1="45.4" y1="66" x2="45" y2="75" stroke="#8a8a8a" stroke-width="1.6"/><circle cx="45.5" cy="64.8" r="2.6" fill="#2b7f9a"/><path d="M35,74.6 H54.6 C55,84 52,92.9 44.8,92.9 C37.6,92.9 34.6,84 35,74.6Z" fill="#2b7f9a"/><circle cx="40.6" cy="80.6" r="1.8" fill="#1a2a4a"/><circle cx="49.2" cy="80.6" r="1.8" fill="#1a2a4a"/><rect x="43.8" y="92.7" width="2.2" height="4.4" fill="#7a909a"/><rect x="39.4" y="96.8" width="11" height="2.4" rx="1" fill="#5a9ab0"/></g><g transform="translate(468.70000000000005,82.3)" stroke="#8c7a52" fill="none"><circle r="13.50" stroke-width="3.6" stroke-dasharray="2.356 2.356"/><circle r="10.30" stroke-width="3.8"/><line x1="-10.30" y1="0" x2="10.30" y2="0" stroke-width="3.4" transform="rotate(30)"/><line x1="-10.30" y1="0" x2="10.30" y2="0" stroke-width="3.4" transform="rotate(90)"/><line x1="-10.30" y1="0" x2="10.30" y2="0" stroke-width="3.4" transform="rotate(150)"/><circle r="3.6" stroke-width="3" fill="#fff"/></g><g transform="translate(387.90000000000003,0.0)"><line x1="105" y1="65" x2="108" y2="75" stroke="#9a9a9a" stroke-width="1.6"/><line x1="118.4" y1="65" x2="116" y2="75" stroke="#9a9a9a" stroke-width="1.6"/><circle cx="104.8" cy="64.2" r="2.8" fill="#8a3c1a"/><circle cx="118.4" cy="64.2" r="2.8" fill="#8a3c1a"/><circle cx="112.1" cy="83.7" r="11" fill="#7a3c10"/><circle cx="107.4" cy="81.8" r="3" fill="#4a4a2a" stroke="#a08a52" stroke-width="1.6"/><circle cx="117" cy="81.8" r="3" fill="#4a4a2a" stroke="#a08a52" stroke-width="1.6"/><rect x="111" y="94.4" width="2.2" height="5.4" fill="#9a9a9a"/><rect x="106.4" y="99.6" width="12" height="2.6" rx="1" fill="#c8c2a4"/></g><g transform="translate(387.20000000000005,85.4)"><line x1="6.2" y1="21.5" x2="7.8" y2="30" stroke="#8a8a8a" stroke-width="1.6"/><line x1="18.6" y1="21.5" x2="17" y2="30" stroke="#8a8a8a" stroke-width="1.6"/><circle cx="5.8" cy="20.6" r="2.7" fill="#2f8f3a"/><circle cx="18.8" cy="20.6" r="2.7" fill="#2f8f3a"/><rect x="2.7" y="28.7" width="19.6" height="19.6" fill="#2e8b2e"/><circle cx="8.8" cy="36" r="3.1" fill="none" stroke="#46e000" stroke-width="2"/><circle cx="16.8" cy="36" r="3.1" fill="none" stroke="#46e000" stroke-width="2"/><rect x="11.4" y="48.3" width="2.2" height="4.6" fill="#7a9a7a"/><rect x="7.4" y="52.4" width="11" height="2.6" rx="1" fill="#3aa63a"/></g><g transform="translate(432.30000000000007,123.7)" stroke="#46de00" fill="none"><circle r="15.90" stroke-width="3.6" stroke-dasharray="2.775 2.775"/><circle r="12.70" stroke-width="3.8"/><line x1="-12.70" y1="0" x2="12.70" y2="0" stroke-width="3.4" transform="rotate(30)"/><line x1="-12.70" y1="0" x2="12.70" y2="0" stroke-width="3.4" transform="rotate(90)"/><line x1="-12.70" y1="0" x2="12.70" y2="0" stroke-width="3.4" transform="rotate(150)"/><circle r="3.6" stroke-width="3" fill="#fff"/></g><g transform="translate(387.20000000000005,85.4)"><line x1="71.8" y1="24" x2="75" y2="33" stroke="#8a8a8a" stroke-width="1.6"/><line x1="85" y1="22" x2="83.5" y2="33" stroke="#8a8a8a" stroke-width="1.6"/><circle cx="71.2" cy="22.8" r="2.9" fill="#33347e"/><circle cx="85.2" cy="20.4" r="2.9" fill="#33347e"/><path d="M68,31.8 H90.7 C91,42 88,51.5 79.3,51.5 C70.5,51.5 67.6,42 68,31.8Z" fill="#30307c"/><circle cx="74.2" cy="39.2" r="3.2" fill="none" stroke="#3a90c6" stroke-width="2"/><circle cx="84" cy="39.2" r="3.2" fill="none" stroke="#3a90c6" stroke-width="2"/><rect x="78.2" y="51.3" width="2.2" height="4.6" fill="#7a8aa0"/><rect x="73" y="55.4" width="12.6" height="2.6" rx="1" fill="#7ab8da"/></g><g transform="translate(498.20000000000005,124.5)" stroke="#4a98ca" fill="none"><circle r="15.90" stroke-width="3.6" stroke-dasharray="2.775 2.775"/><circle r="12.70" stroke-width="3.8"/><line x1="-12.70" y1="0" x2="12.70" y2="0" stroke-width="3.4" transform="rotate(30)"/><line x1="-12.70" y1="0" x2="12.70" y2="0" stroke-width="3.4" transform="rotate(90)"/><line x1="-12.70" y1="0" x2="12.70" y2="0" stroke-width="3.4" transform="rotate(150)"/><circle r="3.6" stroke-width="3" fill="#fff"/></g><g transform="translate(403.20000000000005,164.5)" stroke="#52aae2" fill="none"><circle r="13.50" stroke-width="3.6" stroke-dasharray="2.356 2.356"/><circle r="10.30" stroke-width="3.8"/><line x1="-10.30" y1="0" x2="10.30" y2="0" stroke-width="3.4" transform="rotate(30)"/><line x1="-10.30" y1="0" x2="10.30" y2="0" stroke-width="3.4" transform="rotate(90)"/><line x1="-10.30" y1="0" x2="10.30" y2="0" stroke-width="3.4" transform="rotate(150)"/><circle r="3.6" stroke-width="3" fill="#fff"/></g><g transform="translate(386.90000000000003,84.2)"><line x1="45.4" y1="66" x2="45" y2="75" stroke="#8a8a8a" stroke-width="1.6"/><circle cx="45.5" cy="64.8" r="2.6" fill="#2b7f9a"/><path d="M35,74.6 H54.6 C55,84 52,92.9 44.8,92.9 C37.6,92.9 34.6,84 35,74.6Z" fill="#2b7f9a"/><circle cx="40.6" cy="80.6" r="1.8" fill="#1a2a4a"/><circle cx="49.2" cy="80.6" r="1.8" fill="#1a2a4a"/><rect x="43.8" y="92.7" width="2.2" height="4.4" fill="#7a909a"/><rect x="39.4" y="96.8" width="11" height="2.4" rx="1" fill="#5a9ab0"/></g><g transform="translate(467.70000000000005,166.5)" stroke="#8c7a52" fill="none"><circle r="13.50" stroke-width="3.6" stroke-dasharray="2.356 2.356"/><circle r="10.30" stroke-width="3.8"/><line x1="-10.30" y1="0" x2="10.30" y2="0" stroke-width="3.4" transform="rotate(30)"/><line x1="-10.30" y1="0" x2="10.30" y2="0" stroke-width="3.4" transform="rotate(90)"/><line x1="-10.30" y1="0" x2="10.30" y2="0" stroke-width="3.4" transform="rotate(150)"/><circle r="3.6" stroke-width="3" fill="#fff"/></g><g transform="translate(386.90000000000003,84.2)"><line x1="105" y1="65" x2="108" y2="75" stroke="#9a9a9a" stroke-width="1.6"/><line x1="118.4" y1="65" x2="116" y2="75" stroke="#9a9a9a" stroke-width="1.6"/><circle cx="104.8" cy="64.2" r="2.8" fill="#8a3c1a"/><circle cx="118.4" cy="64.2" r="2.8" fill="#8a3c1a"/><circle cx="112.1" cy="83.7" r="11" fill="#7a3c10"/><circle cx="107.4" cy="81.8" r="3" fill="#4a4a2a" stroke="#a08a52" stroke-width="1.6"/><circle cx="117" cy="81.8" r="3" fill="#4a4a2a" stroke="#a08a52" stroke-width="1.6"/><rect x="111" y="94.4" width="2.2" height="5.4" fill="#9a9a9a"/><rect x="106.4" y="99.6" width="12" height="2.6" rx="1" fill="#c8c2a4"/></g><g transform="translate(386.20000000000005,169.60000000000002)"><line x1="6.2" y1="21.5" x2="7.8" y2="30" stroke="#8a8a8a" stroke-width="1.6"/><line x1="18.6" y1="21.5" x2="17" y2="30" stroke="#8a8a8a" stroke-width="1.6"/><circle cx="5.8" cy="20.6" r="2.7" fill="#2f8f3a"/><circle cx="18.8" cy="20.6" r="2.7" fill="#2f8f3a"/><rect x="2.7" y="28.7" width="19.6" height="19.6" fill="#2e8b2e"/><circle cx="8.8" cy="36" r="3.1" fill="none" stroke="#46e000" stroke-width="2"/><circle cx="16.8" cy="36" r="3.1" fill="none" stroke="#46e000" stroke-width="2"/><rect x="11.4" y="48.3" width="2.2" height="4.6" fill="#7a9a7a"/><rect x="7.4" y="52.4" width="11" height="2.6" rx="1" fill="#3aa63a"/></g><g transform="translate(431.30000000000007,207.9)" stroke="#46de00" fill="none"><circle r="15.90" stroke-width="3.6" stroke-dasharray="2.775 2.775"/><circle r="12.70" stroke-width="3.8"/><line x1="-12.70" y1="0" x2="12.70" y2="0" stroke-width="3.4" transform="rotate(30)"/><line x1="-12.70" y1="0" x2="12.70" y2="0" stroke-width="3.4" transform="rotate(90)"/><line x1="-12.70" y1="0" x2="12.70" y2="0" stroke-width="3.4" transform="rotate(150)"/><circle r="3.6" stroke-width="3" fill="#fff"/></g><g transform="translate(386.20000000000005,169.60000000000002)"><line x1="71.8" y1="24" x2="75" y2="33" stroke="#8a8a8a" stroke-width="1.6"/><line x1="85" y1="22" x2="83.5" y2="33" stroke="#8a8a8a" stroke-width="1.6"/><circle cx="71.2" cy="22.8" r="2.9" fill="#33347e"/><circle cx="85.2" cy="20.4" r="2.9" fill="#33347e"/><path d="M68,31.8 H90.7 C91,42 88,51.5 79.3,51.5 C70.5,51.5 67.6,42 68,31.8Z" fill="#30307c"/><circle cx="74.2" cy="39.2" r="3.2" fill="none" stroke="#3a90c6" stroke-width="2"/><circle cx="84" cy="39.2" r="3.2" fill="none" stroke="#3a90c6" stroke-width="2"/><rect x="78.2" y="51.3" width="2.2" height="4.6" fill="#7a8aa0"/><rect x="73" y="55.4" width="12.6" height="2.6" rx="1" fill="#7ab8da"/></g><g transform="translate(497.20000000000005,208.70000000000002)" stroke="#4a98ca" fill="none"><circle r="15.90" stroke-width="3.6" stroke-dasharray="2.775 2.775"/><circle r="12.70" stroke-width="3.8"/><line x1="-12.70" y1="0" x2="12.70" y2="0" stroke-width="3.4" transform="rotate(30)"/><line x1="-12.70" y1="0" x2="12.70" y2="0" stroke-width="3.4" transform="rotate(90)"/><line x1="-12.70" y1="0" x2="12.70" y2="0" stroke-width="3.4" transform="rotate(150)"/><circle r="3.6" stroke-width="3" fill="#fff"/></g></g></svg></div><span style="position:absolute;left:139.85px;top:695px;font-size:18.1px;line-height:1;color:#b0b0b0;white-space:nowrap;letter-spacing:0.118px;">Mention (Photo)</span><div class="track"><div class="thumb" style="top:5px;height:400px"></div></div></div></div><div class="col" style="left:1376px"><div class="colhdr"><div class="hbg"></div><div class="handle"></div></div><div class="colbody"><svg style="position:absolute;left:13.5px;top:13.5px" width="25.75" height="22.79" viewBox="0 2.2 24 19.6" preserveAspectRatio="none"><path fill="#4da7ea" d="M23.953 4.57a10 10 0 01-2.825.775 4.958 4.958 0 002.163-2.723c-.951.555-2.005.959-3.127 1.184a4.92 4.92 0 00-8.384 4.482C7.69 8.095 4.067 6.13 1.64 3.162a4.822 4.822 0 00-.666 2.475c0 1.71.87 3.213 2.188 4.096a4.904 4.904 0 01-2.228-.616v.06a4.923 4.923 0 003.946 4.827 4.996 4.996 0 01-2.212.085 4.936 4.936 0 004.604 3.417 9.867 9.867 0 01-6.102 2.105c-.39 0-.779-.023-1.17-.067a13.995 13.995 0 007.557 2.209c9.053 0 13.998-7.496 13.998-13.985 0-.21 0-.42-.015-.63A9.935 9.935 0 0024 4.59z"/></svg><svg style="position:absolute;left:13.5px;top:541px" width="25.75" height="22.79" viewBox="0 2.2 24 19.6" preserveAspectRatio="none"><path fill="#4da7ea" d="M23.953 4.57a10 10 0 01-2.825.775 4.958 4.958 0 002.163-2.723c-.951.555-2.005.959-3.127 1.184a4.92 4.92 0 00-8.384 4.482C7.69 8.095 4.067 6.13 1.64 3.162a4.822 4.822 0 00-.666 2.475c0 1.71.87 3.213 2.188 4.096a4.904 4.904 0 01-2.228-.616v.06a4.923 4.923 0 003.946 4.827 4.996 4.996 0 01-2.212.085 4.936 4.936 0 004.604 3.417 9.867 9.867 0 01-6.102 2.105c-.39 0-.779-.023-1.17-.067a13.995 13.995 0 007.557 2.209c9.053 0 13.998-7.496 13.998-13.985 0-.21 0-.42-.015-.63A9.935 9.935 0 0024 4.59z"/></svg><div class="sep" style="top:525px"></div><svg style="position:absolute;left:142.5px;top:687px" width="23" height="23.5" viewBox="0 0 23 23.5"><g fill="#8c8c8c"><rect x="4.2" y="0" width="2.4" height="3" rx="0.8"/><rect x="16.4" y="0" width="2.4" height="3" rx="0.8"/><rect x="0.4" y="2.2" width="22.2" height="2.6"/><path d="M0.4,6.9 H22.6 V23.3 H0.4Z M3.6,10.4 V12.9 H6.1 V10.4Z M8.4,10.4 V12.9 H10.9 V10.4Z M13.1,10.4 V12.9 H15.6 V10.4Z M17.6,10.4 V12.9 H20.1 V10.4Z M3.6,14.8 V17.3 H6.1 V14.8Z M8.4,14.8 V17.3 H10.9 V14.8Z M13.1,14.8 V17.3 H15.6 V14.8Z M17.6,14.8 V17.3 H20.1 V14.8Z M3.6,19.1 V21.6 H6.1 V19.1Z M8.4,19.1 V21.6 H10.9 V19.1Z M13.1,19.1 V21.6 H15.6 V19.1Z M17.6,19.1 V21.6 H20.1 V19.1Z" fill-rule="evenodd"/></g></svg><span style="position:absolute;left:171.73px;top:690px;font-size:18.2px;line-height:1;color:#b0b0b0;white-space:nowrap;letter-spacing:0.092px;">Jan 12 2016 03:21 AM</span><div class="track" style="left:612.5px;right:auto"><div class="thumb" style="top:5px;height:400px"></div></div></div></div>
</div>
<div id="dd" style="left:1398px;top:56px;"><div style="position:absolute;left:0;top:0;width:100%;height:153.1px;background:#f3f3f3"></div><div style="position:absolute;left:0;top:767px;width:100%;height:91.39999999999998px;background:repeating-linear-gradient(45deg,#eeeeee 0,#eeeeee 20px,#f1f1f1 20px,#f1f1f1 40px);border-top:1px solid #e0e0e0;border-bottom:1px solid #dcdcdc"></div><span style="position:absolute;left:33.86px;top:24px;font-size:21.2px;line-height:1;color:#4e4e4e;white-space:nowrap;letter-spacing:0.274px;font-weight:bold;">Settings</span><span style="position:absolute;left:32.91px;top:58px;font-size:19.9px;line-height:1;color:#585858;white-space:nowrap;letter-spacing:0.055px;">Latest &amp; Greatest Screen to manage users, accounts and</span><span style="position:absolute;left:33.70px;top:85px;font-size:19.9px;line-height:1;color:#585858;white-space:nowrap;letter-spacing:0.127px;">clients. Assign approvers, change passwords, access</span><span style="position:absolute;left:33.21px;top:112px;font-size:19.9px;line-height:1;color:#585858;white-space:nowrap;letter-spacing:0.135px;">levels, white labeling etc.</span><span style="position:absolute;left:33.12px;top:168px;font-size:21.2px;line-height:1;color:#4e4e4e;white-space:nowrap;letter-spacing:0.185px;font-weight:bold;">Rule Engine</span><span style="position:absolute;left:33.50px;top:203px;font-size:19.9px;line-height:1;color:#585858;white-space:nowrap;letter-spacing:0.067px;">Create Rules to automatically tag, prioritize, assign and</span><span style="position:absolute;left:34.20px;top:229px;font-size:19.9px;line-height:1;color:#585858;white-space:nowrap;letter-spacing:0.099px;">filter messages based on keywords, influence, custom</span><span style="position:absolute;left:33.21px;top:256px;font-size:19.9px;line-height:1;color:#585858;white-space:nowrap;letter-spacing:0.321px;">properties etc.</span><div style="position:absolute;left:0;top:297px;width:100%;height:1px;background:#dcdcdc"></div><span style="position:absolute;left:33.12px;top:312px;font-size:21.2px;line-height:1;color:#4e4e4e;white-space:nowrap;letter-spacing:0.680px;font-weight:bold;">Market Place</span><span style="position:absolute;left:32.71px;top:346px;font-size:19.9px;line-height:1;color:#585858;white-space:nowrap;letter-spacing:0.177px;">Install and Discover custom applications supported by</span><span style="position:absolute;left:33.60px;top:373px;font-size:19.9px;line-height:1;color:#585858;white-space:nowrap;letter-spacing:0.160px;">Sprinklr.</span><div style="position:absolute;left:0;top:414.7px;width:100%;height:1px;background:#dcdcdc"></div><span style="position:absolute;left:33.12px;top:429px;font-size:21.2px;line-height:1;color:#4e4e4e;white-space:nowrap;letter-spacing:0.350px;font-weight:bold;">Brands</span><span style="position:absolute;left:34.50px;top:464px;font-size:19.9px;line-height:1;color:#585858;white-space:nowrap;letter-spacing:0.055px;">Add and Manage your brands. View the details</span><span style="position:absolute;left:33.70px;top:490px;font-size:19.9px;line-height:1;color:#585858;white-space:nowrap;letter-spacing:0.208px;">associated with your brand.</span><div style="position:absolute;left:0;top:532.2px;width:100%;height:1px;background:#dcdcdc"></div><span style="position:absolute;left:33.65px;top:546px;font-size:21.2px;line-height:1;color:#4e4e4e;white-space:nowrap;letter-spacing:0.241px;font-weight:bold;">Content &amp; Feeds</span><span style="position:absolute;left:33.50px;top:582px;font-size:19.9px;line-height:1;color:#585858;white-space:nowrap;letter-spacing:0.086px;">Create, source, curate and publish content. Create</span><span style="position:absolute;left:33.21px;top:608px;font-size:19.9px;line-height:1;color:#585858;white-space:nowrap;letter-spacing:0.130px;">landing pages, host long-form content and manage RSS</span><span style="position:absolute;left:33.70px;top:635px;font-size:19.9px;line-height:1;color:#585858;white-space:nowrap;letter-spacing:0.275px;">content feeds.</span><div style="position:absolute;left:0;top:676.2px;width:100%;height:1px;background:#dcdcdc"></div><span style="position:absolute;left:33.65px;top:690px;font-size:21.2px;line-height:1;color:#4e4e4e;white-space:nowrap;letter-spacing:0.166px;font-weight:bold;">Custom Fields</span><span style="position:absolute;left:34.40px;top:726px;font-size:19.9px;line-height:1;color:#585858;white-space:nowrap;letter-spacing:0.091px;">View, create, edit and search custom fields.</span><span style="position:absolute;left:33.65px;top:781px;font-size:21.2px;line-height:1;color:#8e8e8e;white-space:nowrap;letter-spacing:0.222px;font-weight:bold;">Old Settings</span><span style="position:absolute;left:32.91px;top:816px;font-size:19.9px;line-height:1;color:#aaa;white-space:nowrap;letter-spacing:0.144px;">Deprecated version of Settings.</span></div><div style="position:absolute;left:1393px;top:56.75px;width:591.75px;height:155px;border:7px solid #fbb03f"></div>
</div>
</body></html>
